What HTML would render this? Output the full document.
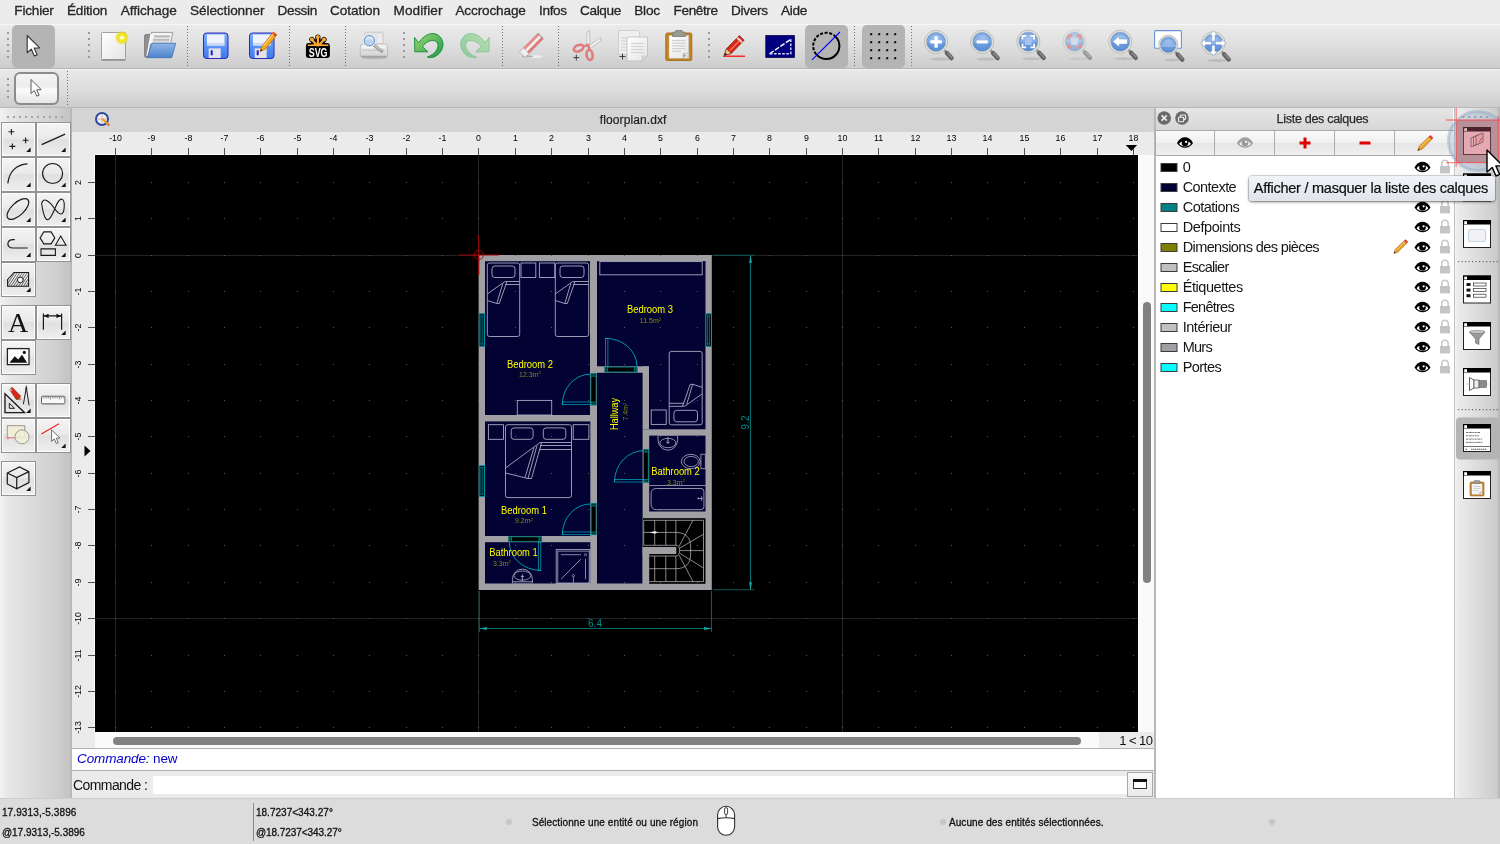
<!DOCTYPE html><html><head><meta charset="utf-8"><title>QCAD</title><style>
*{box-sizing:border-box;margin:0;padding:0}
html,body{width:1500px;height:844px;overflow:hidden;background:#ececec;font-family:"Liberation Sans",sans-serif;color:#222}
.abs{position:absolute}
#root{position:absolute;left:0;top:0;width:1500px;height:844px;overflow:hidden;will-change:transform}
#menubar{position:absolute;left:0;top:0;width:1500px;height:24px;background:#ececec}
#menubar span{position:absolute;top:3px;font-size:14.5px;line-height:17px;color:#262626;white-space:nowrap}
#tb1{position:absolute;left:0;top:24px;width:1500px;height:45px;background:linear-gradient(#f6f6f6 0,#f6f6f6 1px,#ebebeb 1px,#e0e0e0 45%,#cdcdcd 100%);border-bottom:1px solid #b4b4b4}
#tb2{position:absolute;left:0;top:69px;width:1500px;height:39px;background:linear-gradient(#f2f2f2 0,#f2f2f2 1px,#e9e9e9 1px,#dedede 50%,#cdcdcd 100%);border-bottom:1px solid #b8b8b8}
.sel{position:absolute;background:#b4b4b4;border-radius:5px}
.vsep{position:absolute;width:1px;background:repeating-linear-gradient(#707070 0,#707070 1px,transparent 1px,transparent 3px)}
.grip{position:absolute;width:2px}
.grip i{display:block;width:2px;height:2px;background:#9a9a9a;margin-bottom:4px}
#left{position:absolute;left:0;top:108px;width:72px;height:690px;background:linear-gradient(90deg,#f3f3f3 0%,#e7e7e7 12%,#dbdbdb 45%,#cfcfcf 78%,#c3c3c3 97%,#b0b0b0 100%)}
.tbtn{position:absolute;border:1px solid #929292;box-shadow:inset 0 0 0 1px rgba(255,255,255,0.85);background:linear-gradient(#f4f4f4 0%,#eaeaea 45%,#e0e0e0 52%,#efefef 100%)}

#tabbar{position:absolute;left:72px;top:108px;width:1082px;height:24px;background:#d4d4d4}
#hr{position:absolute;left:72px;top:132px;width:1082px;height:23px;background:#ebebeb}
#vr{position:absolute;left:72px;top:155px;width:23px;height:593px;background:#ebebeb}
#canvas{position:absolute;left:95px;top:155px;width:1043px;height:577px;background:#000;overflow:hidden}
#vscroll{position:absolute;left:1138px;top:155px;width:16px;height:577px;background:#fafafa}
#hscroll{position:absolute;left:95px;top:732px;width:1004px;height:16px;background:#fafafa}
#zoomlbl{position:absolute;left:1099px;top:732px;width:55px;height:16px;background:#ebebeb}
#zoomlbl span{position:absolute;white-space:nowrap;color:#111;line-height:15px}
#hist{position:absolute;left:72px;top:748px;width:1082px;height:23px;background:#fff;border-top:1px solid #b0b0b0;border-bottom:1px solid #b0b0b0}
#cmd{position:absolute;left:72px;top:771px;width:1082px;height:27px;background:#ebebeb}
#status{position:absolute;left:0;top:798px;width:1500px;height:46px;background:#dcdcdc;box-shadow:inset 0 1px 0 #cdcdcd}
#status span{position:absolute;font-size:10px;line-height:12px;color:#111;white-space:nowrap;-webkit-text-stroke:0.3px #111}
#rpanel{position:absolute;left:1156px;top:108px;width:298px;height:690px;background:#fff}
#rtb{position:absolute;left:1454px;top:108px;width:46px;height:690px;background:linear-gradient(90deg,#f3f3f3 0,#f3f3f3 1px,#ececec 2px,#dedede 45%,#cecece 88%,#c8c8c8 95.5%,#b9b9b9 96%,#b9b9b9 100%);border-left:1px solid #c2c2c2}
</style></head><body><div id="root"><div id="menubar"><span style="left:14.3px;top:1.7px;font-size:13.6px;letter-spacing:-0.20px;-webkit-text-stroke:0.3px #262626;">Fichier</span><span style="left:66.9px;top:1.7px;font-size:13.6px;letter-spacing:-0.18px;-webkit-text-stroke:0.3px #262626;">Édition</span><span style="left:120.7px;top:1.7px;font-size:13.6px;letter-spacing:-0.03px;-webkit-text-stroke:0.3px #262626;">Affichage</span><span style="left:190.1px;top:1.7px;font-size:13.6px;letter-spacing:-0.11px;-webkit-text-stroke:0.3px #262626;">Sélectionner</span><span style="left:277.5px;top:1.7px;font-size:13.6px;letter-spacing:-0.37px;-webkit-text-stroke:0.3px #262626;">Dessin</span><span style="left:330.1px;top:1.7px;font-size:13.6px;letter-spacing:-0.08px;-webkit-text-stroke:0.3px #262626;">Cotation</span><span style="left:393.5px;top:1.7px;font-size:13.6px;letter-spacing:0.08px;-webkit-text-stroke:0.3px #262626;">Modifier</span><span style="left:455.4px;top:1.7px;font-size:13.6px;letter-spacing:-0.14px;-webkit-text-stroke:0.3px #262626;">Accrochage</span><span style="left:539.0px;top:1.7px;font-size:13.6px;letter-spacing:-0.35px;-webkit-text-stroke:0.3px #262626;">Infos</span><span style="left:580.1px;top:1.7px;font-size:13.6px;letter-spacing:-0.38px;-webkit-text-stroke:0.3px #262626;">Calque</span><span style="left:634.3px;top:1.7px;font-size:13.6px;letter-spacing:-0.25px;-webkit-text-stroke:0.3px #262626;">Bloc</span><span style="left:673.6px;top:1.7px;font-size:13.6px;letter-spacing:-0.40px;-webkit-text-stroke:0.3px #262626;">Fenêtre</span><span style="left:731.1px;top:1.7px;font-size:13.6px;letter-spacing:-0.33px;-webkit-text-stroke:0.3px #262626;">Divers</span><span style="left:781.0px;top:1.7px;font-size:13.6px;letter-spacing:-0.31px;-webkit-text-stroke:0.3px #262626;">Aide</span></div><div id="tb1"><div class="sel" style="left:12px;top:1px;width:43px;height:43px"></div><div class="sel" style="left:805px;top:1px;width:43px;height:43px"></div><div class="sel" style="left:862px;top:1px;width:43px;height:43px"></div><div class="grip" style="left:7px;top:8px"><i></i><i></i><i></i><i></i><i></i></div><div class="grip" style="left:88px;top:8px"><i></i><i></i><i></i><i></i><i></i></div><div class="grip" style="left:403px;top:8px"><i></i><i></i><i></i><i></i><i></i></div><div class="grip" style="left:708px;top:8px"><i></i><i></i><i></i><i></i><i></i></div><div class="vsep" style="left:187px;top:2px;height:40px"></div><div class="vsep" style="left:289px;top:2px;height:40px"></div><div class="vsep" style="left:345px;top:2px;height:40px"></div><div class="vsep" style="left:502px;top:2px;height:40px"></div><div class="vsep" style="left:558px;top:2px;height:40px"></div><div class="vsep" style="left:854px;top:2px;height:40px"></div><div class="vsep" style="left:911px;top:2px;height:40px"></div><svg class="abs" style="left:0;top:0" width="1500" height="45" viewBox="0 24 1500 45"><defs>
<linearGradient id="gPaper" x1="0" y1="0" x2="1" y2="1"><stop offset="0" stop-color="#ffffff"/><stop offset="1" stop-color="#e4e4e4"/></linearGradient>
<linearGradient id="gBlue" x1="0" y1="0" x2="0" y2="1"><stop offset="0" stop-color="#92b6e6"/><stop offset="1" stop-color="#4c84cc"/></linearGradient>
<linearGradient id="gFloppy" x1="0" y1="0" x2="0" y2="1"><stop offset="0" stop-color="#7fb0ff"/><stop offset="1" stop-color="#3b78f0"/></linearGradient>
<linearGradient id="gGreen" x1="0" y1="0" x2="1" y2="1"><stop offset="0" stop-color="#9ad870"/><stop offset="1" stop-color="#1e9a48"/></linearGradient>
<linearGradient id="gGreenL" x1="0" y1="0" x2="1" y2="1"><stop offset="0" stop-color="#bfe0b0"/><stop offset="1" stop-color="#86c89a"/></linearGradient>
<radialGradient id="gLens" cx="0.5" cy="0.3" r="0.8"><stop offset="0" stop-color="#8fb6ea"/><stop offset="1" stop-color="#4a82d0"/></radialGradient>
<radialGradient id="gYel" cx="0.5" cy="0.5" r="0.5"><stop offset="0" stop-color="#ffffc8"/><stop offset="0.3" stop-color="#f6ec2a"/><stop offset="0.7" stop-color="#eee022" stop-opacity="0.95"/><stop offset="1" stop-color="#e8d800" stop-opacity="0.0"/></radialGradient>
<linearGradient id="gSilver" x1="0" y1="0" x2="0" y2="1"><stop offset="0" stop-color="#f4f4f4"/><stop offset="1" stop-color="#cfcfcf"/></linearGradient>
</defs><path transform="translate(27.2,35.5) scale(1.08)" d="M0 0 L0 16 L3.8 12.6 L6.6 19 L9.2 17.9 L6.5 11.7 L11.6 11.5 Z" fill="#fff" stroke="#3c3c3c" stroke-width="1.1" stroke-linejoin="round"/><rect x="101.5" y="32.5" width="24" height="27" rx="1" fill="url(#gPaper)" stroke="#a2a2a2" stroke-width="1"/><path d="M101.5 60 h24" stroke="#8a8a8a" stroke-width="1.4"/><circle cx="121.9" cy="37.7" r="7" fill="url(#gYel)"/><circle cx="121.9" cy="37.7" r="1.8" fill="#fffff0"/><path d="M144.6 36 q0 -1.6 1.6 -1.6 h6 l1.6 1.6 v21.4 h-7.6 q-1.6 0 -1.6 -1.6 z" fill="#909090" stroke="#707070" stroke-width="0.8"/><path d="M151.4 32.4 h21.4 l-2.4 12 h-21.6 z" fill="#f4f4f4" stroke="#8c8c8c" stroke-width="0.8"/><path d="M147.2 56 l4 -22" stroke="#fff" stroke-width="1.4"/><path d="M154 36.4 h16" stroke="#b4b4b4" stroke-width="2"/><path d="M153 39.8 h16.6" stroke="#bcbcbc" stroke-width="2.2"/><path d="M152.4 42.2 h16.6" stroke="#cacaca" stroke-width="1.4"/><path d="M151.7 43.3 h24 l-4 14.4 h-24.4 z" fill="url(#gBlue)" stroke="#3f72bc" stroke-width="0.8" stroke-linejoin="round"/><rect x="203.5" y="33" width="24.5" height="25.5" rx="3" fill="url(#gFloppy)" stroke="#2a2ab8" stroke-width="1"/><rect x="207.0" y="34.5" width="17.5" height="11" fill="#eef2ff"/><rect x="207.0" y="43" width="17.5" height="2.5" fill="#cfd8f4"/><rect x="208.7" y="48.4" width="12" height="9.6" fill="#e4e4e8"/><rect x="210.7" y="50.3" width="2" height="5" fill="#1a1ad8"/><rect x="249.5" y="33" width="24.5" height="25.5" rx="3" fill="url(#gFloppy)" stroke="#2a2ab8" stroke-width="1"/><rect x="253.0" y="34.5" width="17.5" height="11" fill="#eef2ff"/><rect x="253.0" y="43" width="17.5" height="2.5" fill="#cfd8f4"/><rect x="254.7" y="48.4" width="12" height="9.6" fill="#e4e4e8"/><rect x="256.7" y="50.3" width="2" height="5" fill="#1a1ad8"/><path d="M260 51.5 l1.8 -5 l11.5 -14.5 l3.6 2.9 l-11.6 14.4 z" fill="#f6a820" stroke="#b86800" stroke-width="0.7"/><path d="M271.6 33.8 l1.7 -1.9 l3.6 2.9 l-1.6 2 z" fill="#e04830"/><path d="M260 51.5 l0.9 -2.6 l1.6 1.3 z" fill="#402000"/><path d="M263.5 46 l10 -12.4" stroke="#ffe08a" stroke-width="1"/><g stroke="#000" stroke-width="5.2" stroke-linecap="round"><path d="M317.9 45 V37"/><path d="M316.5 45.5 L311.9 39.6"/><path d="M319.3 45.5 L324 39.6"/></g><rect x="305.9" y="43" width="24" height="15" rx="3" fill="#000"/><g stroke="#f9a832" stroke-width="2.2" stroke-linecap="round"><path d="M317.9 45 V37"/><path d="M316.8 45.3 L311.9 39.6"/><path d="M319 45.3 L324 39.6"/></g><circle cx="317.9" cy="37" r="1.9" fill="#f9a832"/><circle cx="311.9" cy="39.5" r="1.9" fill="#f9a832"/><circle cx="324" cy="39.5" r="1.9" fill="#f9a832"/><path d="M309 45.6 Q317.9 42.2 327 45.6 Z" fill="#f9a832"/><rect x="307.6" y="44.5" width="21" height="1.5" rx="0.7" fill="#f9a832"/><text x="308.7" y="56.7" font-size="13" font-weight="bold" fill="#fff" font-family="Liberation Sans" textLength="18.8" lengthAdjust="spacingAndGlyphs">SVG</text><rect x="364.8" y="32.2" width="18.4" height="13" rx="0.8" fill="#e2e2e2" stroke="#c4c4c4" stroke-width="0.7"/><rect x="377.5" y="34" width="4.6" height="9" fill="#ececec"/><path d="M360.3 47 q0 -3 3 -3 h21.4 q3 0 3 3 v8 q0 2 -2 2 h-23.4 q-2 0 -2 -2 z" fill="url(#gSilver)" stroke="#b4b4b4" stroke-width="0.8"/><path d="M361 56.6 h26" stroke="#a2a2a2" stroke-width="1.6"/><ellipse cx="374" cy="58.3" rx="12" ry="1" fill="#000" opacity="0.13"/><path d="M362.5 50.2 h22" stroke="#c0c0c0" stroke-width="1.1"/><path d="M363 47.2 h21.5" stroke="#fafafa" stroke-width="1"/><path d="M374.3 45.6 L381.6 51.2" stroke="#9c9c9c" stroke-width="3.2" stroke-linecap="round"/><path d="M374.8 45.6 L381.2 50.5" stroke="#c8c8c8" stroke-width="1.2" stroke-linecap="round"/><circle cx="369.4" cy="40.7" r="6.4" fill="#f2f2f0"/><circle cx="369.4" cy="40.7" r="5.2" fill="#bdd2ec" stroke="#5a8ed0" stroke-width="1"/><path d="M365.2 40 a4.3 4.3 0 0 1 8.4 0 q-4.2 -1.6 -8.4 0z" fill="#e4eefa" opacity="0.8"/><path d="M414.5 37.4 L414.8 51.8 L427.9 51.8 L422.4 46.6 C425 43.5 428 41 431 40.6 C436 40 438.5 43 437.9 46.5 C437.3 51 432.5 55.5 427.2 57 C430 58.2 433.5 57.5 436 56 C440.5 53.3 443.2 48.5 443 44 C442.7 38 438.5 33.8 433 33.6 C427 33.4 422 38 418.6 42.8 Z" fill="url(#gGreen)" stroke="#168a3c" stroke-width="0.9" stroke-linejoin="round"/><g transform="translate(903.7,0) scale(-1,1)"><path d="M414.5 37.4 L414.8 51.8 L427.9 51.8 L422.4 46.6 C425 43.5 428 41 431 40.6 C436 40 438.5 43 437.9 46.5 C437.3 51 432.5 55.5 427.2 57 C430 58.2 433.5 57.5 436 56 C440.5 53.3 443.2 48.5 443 44 C442.7 38 438.5 33.8 433 33.6 C427 33.4 422 38 418.6 42.8 Z" fill="url(#gGreenL)" stroke="#86c498" stroke-width="0.9" stroke-linejoin="round"/></g><ellipse cx="531" cy="56.6" rx="12" ry="1.5" fill="#fff" opacity="0.55"/><ellipse cx="527" cy="56.4" rx="6" ry="1.2" fill="#777" opacity="0.5"/><g transform="translate(531.6,45.2) rotate(-45.5)"><rect x="-13.2" y="-3.9" width="26" height="7.8" rx="1" fill="#e07a7a" stroke="#c46464" stroke-width="0.4"/><rect x="-13.2" y="-3.9" width="26" height="2.6" fill="#e89494" opacity="0.7"/><rect x="-13.2" y="-1.4" width="26" height="2.7" fill="#f0f0f0"/><rect x="-13.2" y="-3.9" width="5.4" height="7.8" fill="#efefef" stroke="#b8b0b0" stroke-width="0.4"/><path d="M12.8 -3.9 v7.8" stroke="#8a8a8a" stroke-width="0.9"/></g><path d="M586.5 46 l0.5 -14 l2.6 -1.5 l0.2 15 z" fill="#eee" stroke="#aaa" stroke-width="0.6"/><path d="M588.5 46 l12 -8.5 l0.5 3.3 l-10.5 7.5 z" fill="#eee" stroke="#aaa" stroke-width="0.6"/><ellipse cx="578.6" cy="48.2" rx="5" ry="3" transform="rotate(-22 578.6 48.2)" fill="none" stroke="#e27c7c" stroke-width="2.6"/><ellipse cx="589.6" cy="55" rx="3" ry="5" transform="rotate(-8 589.6 55)" fill="none" stroke="#e27c7c" stroke-width="2.6"/><path d="M584.2 46.4 l3.8 -1.6 l1.4 4.4" stroke="#e27c7c" stroke-width="2.4" fill="none"/><path d="M573.3 57.6 h6 M576.3 54.6 v6" stroke="#333" stroke-width="0.9"/><path d="M618.5 30.5 h19.5 l1.5 1.5 v22.5 h-21 z" fill="#efefef" stroke="#c8c8c8" stroke-width="0.8"/><path d="M621 38 h6" stroke="#d0d0d0" stroke-width="1"/><path d="M621 41 h6" stroke="#d0d0d0" stroke-width="1"/><path d="M621 44 h6" stroke="#d0d0d0" stroke-width="1"/><path d="M621 47 h6" stroke="#d0d0d0" stroke-width="1"/><path d="M621 50 h6" stroke="#d0d0d0" stroke-width="1"/><path d="M627 37 h20.5 v19 l-5.5 5 h-15 z" fill="url(#gPaper)" stroke="#bcbcbc" stroke-width="0.8"/><path d="M647.5 56 h-5.5 v5 z" fill="#d8d8d8" stroke="#bbb" stroke-width="0.5"/><path d="M631 43.5 h13" stroke="#d4d4d4" stroke-width="1.1"/><path d="M631 46.5 h13" stroke="#d4d4d4" stroke-width="1.1"/><path d="M631 49.5 h13" stroke="#d4d4d4" stroke-width="1.1"/><path d="M631 52.5 h13" stroke="#d4d4d4" stroke-width="1.1"/><path d="M619.5 56.5 h6 M622.5 53.5 v6" stroke="#333" stroke-width="0.9"/><rect x="665.8" y="33" width="26" height="27.5" rx="1.5" fill="#c48424" stroke="#a06a18" stroke-width="0.9"/><rect x="669" y="35.5" width="19.8" height="22.8" fill="url(#gPaper)" stroke="#b0b0b0" stroke-width="0.4"/><path d="M672 40.5 h13.5" stroke="#d0d0d0" stroke-width="1.2"/><path d="M672 43.2 h13.5" stroke="#d0d0d0" stroke-width="1.2"/><path d="M672 45.9 h13.5" stroke="#d0d0d0" stroke-width="1.2"/><path d="M672 48.6 h13.5" stroke="#d0d0d0" stroke-width="1.2"/><path d="M672 51.3 h9" stroke="#d0d0d0" stroke-width="1.2"/><path d="M683 58.3 v-5 h5.8 z" fill="#a8a8a8"/><path d="M683 53.3 h5.8 v5 z" fill="#e0e0e0" stroke="#b0b0b0" stroke-width="0.4"/><path d="M672.5 36.5 v-3 q0 -1.5 1.5 -1.5 h1.8 v-1.5 h6.2 v1.5 h1.8 q1.5 0 1.5 1.5 v3 z" fill="#9a9a90" stroke="#6e6e66" stroke-width="0.7"/><path d="M723 56.2 h22" stroke="#ff0000" stroke-width="1.2"/><path d="M724.3 55.3 l2.2 -6.5 l12.8 -13.2 l4.8 4.6 l-12.9 13.3 z" fill="#d82818" stroke="#7a1408" stroke-width="0.7"/><path d="M730 50.5 l11 -11.4" stroke="#ff7860" stroke-width="1.2"/><path d="M724.3 55.3 l2.2 -6.5 l4.7 4.7 z" fill="#f0c890" stroke="#7a1408" stroke-width="0.5"/><path d="M724.3 55.3 l0.9 -2.6 l1.8 1.8 z" fill="#111"/><path d="M736.5 38.4 l4.8 4.6 l1.3 -1.4 l-4.8 -4.6 z" fill="#d8d8d8"/><rect x="765.8" y="35.6" width="28.6" height="21.8" fill="#000080" stroke="#000040" stroke-width="0.8"/><path d="M769.5 53.8 L790.8 39.3" stroke="#fff" stroke-width="1.4" stroke-dasharray="5 1.6"/><path d="M790.8 39.3 V53.8 H769.5" stroke="#dcdcff" stroke-width="1.4" stroke-dasharray="2.6 1.5" fill="none"/><path d="M833.6 35.0 A13.1 13.1 0 1 1 816.1 54.1" fill="none" stroke="#000" stroke-width="2"/><path d="M816.1 54.1 A13.1 13.1 0 0 1 833.6 35.0" fill="none" stroke="#000" stroke-width="2" stroke-dasharray="3 1.6"/><path d="M812 59.8 L840 32" stroke="#0000ff" stroke-width="1.1"/><rect x="870.2" y="33.2" width="2" height="2" fill="#000"/><rect x="870.2" y="41.2" width="2" height="2" fill="#000"/><rect x="870.2" y="49.2" width="2" height="2" fill="#000"/><rect x="870.2" y="57.2" width="2" height="2" fill="#000"/><rect x="878.2" y="33.2" width="2" height="2" fill="#000"/><rect x="878.2" y="41.2" width="2" height="2" fill="#000"/><rect x="878.2" y="49.2" width="2" height="2" fill="#000"/><rect x="878.2" y="57.2" width="2" height="2" fill="#000"/><rect x="886.2" y="33.2" width="2" height="2" fill="#000"/><rect x="886.2" y="41.2" width="2" height="2" fill="#000"/><rect x="886.2" y="49.2" width="2" height="2" fill="#000"/><rect x="886.2" y="57.2" width="2" height="2" fill="#000"/><rect x="894.2" y="33.2" width="2" height="2" fill="#000"/><rect x="894.2" y="41.2" width="2" height="2" fill="#000"/><rect x="894.2" y="49.2" width="2" height="2" fill="#000"/><rect x="894.2" y="57.2" width="2" height="2" fill="#000"/><g opacity="1"><ellipse cx="940.1" cy="59.1" rx="10.0" ry="1.5" fill="#000" opacity="0.10"/><path d="M943.8 49.6 L947.5 53.5" stroke="#9a9a9a" stroke-width="2.4" stroke-linecap="round"/><path d="M946.9 53.1 L951.5 58.1" stroke="#626262" stroke-width="4.4" stroke-linecap="round"/><path d="M947.7 53.1 L951.9 57.5" stroke="#8e8e8e" stroke-width="1.4" stroke-linecap="round"/><circle cx="936.1" cy="41.9" r="11.6" fill="#e6e6de" stroke="#b4b4aa" stroke-width="0.8"/><circle cx="936.1" cy="41.9" r="9.6" fill="url(#gLens)" stroke="#98a8bc" stroke-width="0.6"/><path d="M926.7 42.9 A9.5 9.5 0 0 1 945.5 42.9 Z" fill="#fff" opacity="0.16"/><path d="M930.6 41.9 h11 M936.1 36.4 v11" stroke="#fff" stroke-width="3.2"/><path d="M930.6 41.9 h11 M936.1 36.4 v11" stroke="#ffffff" stroke-width="2.2"/></g><g opacity="1"><ellipse cx="986.2" cy="59.1" rx="10.0" ry="1.5" fill="#000" opacity="0.10"/><path d="M989.9 49.6 L993.6 53.5" stroke="#9a9a9a" stroke-width="2.4" stroke-linecap="round"/><path d="M993.0 53.1 L997.6 58.1" stroke="#626262" stroke-width="4.4" stroke-linecap="round"/><path d="M993.8 53.1 L998.0 57.5" stroke="#8e8e8e" stroke-width="1.4" stroke-linecap="round"/><circle cx="982.2" cy="41.9" r="11.6" fill="#e6e6de" stroke="#b4b4aa" stroke-width="0.8"/><circle cx="982.2" cy="41.9" r="9.6" fill="url(#gLens)" stroke="#98a8bc" stroke-width="0.6"/><path d="M972.8000000000001 42.9 A9.5 9.5 0 0 1 991.6 42.9 Z" fill="#fff" opacity="0.16"/><path d="M976.6 41.9 h11.2" stroke="#fff" stroke-width="3"/></g><g opacity="1"><ellipse cx="1032.3" cy="58.800000000000004" rx="10.0" ry="1.5" fill="#000" opacity="0.10"/><path d="M1036.0 49.3 L1039.7 53.2" stroke="#9a9a9a" stroke-width="2.4" stroke-linecap="round"/><path d="M1039.1 52.8 L1043.7 57.8" stroke="#626262" stroke-width="4.4" stroke-linecap="round"/><path d="M1039.9 52.8 L1044.1 57.2" stroke="#8e8e8e" stroke-width="1.4" stroke-linecap="round"/><circle cx="1028.3" cy="41.6" r="11.6" fill="#e6e6de" stroke="#b4b4aa" stroke-width="0.8"/><circle cx="1028.3" cy="41.6" r="9.6" fill="url(#gLens)" stroke="#98a8bc" stroke-width="0.6"/><path d="M1018.9 42.6 A9.5 9.5 0 0 1 1037.6999999999998 42.6 Z" fill="#fff" opacity="0.16"/><rect x="1025.0" y="38.300000000000004" width="6.6" height="6.6" fill="#a9c4ea"/><path d="M1022.5 39.4 v-3.6 h3.6" stroke="#fff" stroke-width="1.7" fill="none"/><path d="M1022.5 43.800000000000004 v3.6 h3.6" stroke="#fff" stroke-width="1.7" fill="none"/><path d="M1034.1 39.4 v-3.6 h-3.6" stroke="#fff" stroke-width="1.7" fill="none"/><path d="M1034.1 43.800000000000004 v3.6 h-3.6" stroke="#fff" stroke-width="1.7" fill="none"/></g><g opacity="0.55"><ellipse cx="1078.5" cy="58.800000000000004" rx="10.0" ry="1.5" fill="#000" opacity="0.10"/><path d="M1082.2 49.3 L1085.9 53.2" stroke="#9a9a9a" stroke-width="2.4" stroke-linecap="round"/><path d="M1085.3 52.8 L1089.9 57.8" stroke="#626262" stroke-width="4.4" stroke-linecap="round"/><path d="M1086.1 52.8 L1090.3 57.2" stroke="#8e8e8e" stroke-width="1.4" stroke-linecap="round"/><circle cx="1074.5" cy="41.6" r="11.6" fill="#e6e6de" stroke="#b4b4aa" stroke-width="0.8"/><circle cx="1074.5" cy="41.6" r="9.6" fill="url(#gLens)" stroke="#98a8bc" stroke-width="0.6"/><path d="M1065.1000000000001 42.6 A9.5 9.5 0 0 1 1083.8999999999999 42.6 Z" fill="#fff" opacity="0.16"/><rect x="1071.2" y="38.300000000000004" width="6.6" height="6.6" fill="#c8d8f0"/><path d="M1068.7 39.4 v-3.6 h3.6" stroke="#f05050" stroke-width="1.9" fill="none"/><path d="M1068.7 43.800000000000004 v3.6 h3.6" stroke="#f05050" stroke-width="1.9" fill="none"/><path d="M1080.3 39.4 v-3.6 h-3.6" stroke="#f05050" stroke-width="1.9" fill="none"/><path d="M1080.3 43.800000000000004 v3.6 h-3.6" stroke="#f05050" stroke-width="1.9" fill="none"/></g><g opacity="1"><ellipse cx="1124.3" cy="58.800000000000004" rx="10.0" ry="1.5" fill="#000" opacity="0.10"/><path d="M1128.0 49.3 L1131.7 53.2" stroke="#9a9a9a" stroke-width="2.4" stroke-linecap="round"/><path d="M1131.1 52.8 L1135.7 57.8" stroke="#626262" stroke-width="4.4" stroke-linecap="round"/><path d="M1131.9 52.8 L1136.1 57.2" stroke="#8e8e8e" stroke-width="1.4" stroke-linecap="round"/><circle cx="1120.3" cy="41.6" r="11.6" fill="#e6e6de" stroke="#b4b4aa" stroke-width="0.8"/><circle cx="1120.3" cy="41.6" r="9.6" fill="url(#gLens)" stroke="#98a8bc" stroke-width="0.6"/><path d="M1110.9 42.6 A9.5 9.5 0 0 1 1129.6999999999998 42.6 Z" fill="#fff" opacity="0.16"/><path d="M1112.8 41.6 l6.5 -5.5 v3 h8 v5 h-8 v3 z" fill="#fff" stroke="#5a88cc" stroke-width="0.4"/></g><rect x="1154.6" y="30.6" width="26.8" height="17.6" rx="1" fill="#fff" stroke="#6a94d8" stroke-width="1.1"/><g opacity="1"><ellipse cx="1172.3" cy="60.028" rx="8.299999999999999" ry="1.5" fill="#000" opacity="0.10"/><path d="M1174.6 51.1 L1178.3 55.0" stroke="#9a9a9a" stroke-width="2.4" stroke-linecap="round"/><path d="M1177.7 54.6 L1182.3 59.6" stroke="#626262" stroke-width="4.4" stroke-linecap="round"/><path d="M1178.5 54.6 L1182.7 59.0" stroke="#8e8e8e" stroke-width="1.4" stroke-linecap="round"/><circle cx="1168.3" cy="44.8" r="9.628" fill="#e6e6de" stroke="#b4b4aa" stroke-width="0.8"/><circle cx="1168.3" cy="44.8" r="7.967999999999999" fill="url(#gLens)" stroke="#98a8bc" stroke-width="0.6"/><path d="M1160.532 45.8 A7.867999999999999 7.867999999999999 0 0 1 1176.068 45.8 Z" fill="#fff" opacity="0.16"/><path d="M1160.6 46 h15.4" stroke="#a8c4ec" stroke-width="1.6" opacity="0.7"/></g><g opacity="1"><ellipse cx="1217.4" cy="60.400000000000006" rx="10.0" ry="1.5" fill="#000" opacity="0.10"/><path d="M1221.1 50.9 L1224.8 54.8" stroke="#9a9a9a" stroke-width="2.4" stroke-linecap="round"/><path d="M1224.2 54.4 L1228.8 59.4" stroke="#626262" stroke-width="4.4" stroke-linecap="round"/><path d="M1225.0 54.4 L1229.2 58.8" stroke="#8e8e8e" stroke-width="1.4" stroke-linecap="round"/><circle cx="1213.4" cy="43.2" r="11.6" fill="#e6e6de" stroke="#b4b4aa" stroke-width="0.8"/><circle cx="1213.4" cy="43.2" r="9.6" fill="url(#gLens)" stroke="#98a8bc" stroke-width="0.6"/><path d="M1204.0000000000002 44.2 A9.5 9.5 0 0 1 1222.8 44.2 Z" fill="#fff" opacity="0.16"/><path transform="rotate(0 1213.4 43.2)" d="M1211.8000000000002 41.2 v-6 h-2.4 l4 -4.6 l4 4.6 h-2.4 v6 z" fill="#fff" stroke="#5a88cc" stroke-width="0.5"/><path transform="rotate(90 1213.4 43.2)" d="M1211.8000000000002 41.2 v-6 h-2.4 l4 -4.6 l4 4.6 h-2.4 v6 z" fill="#fff" stroke="#5a88cc" stroke-width="0.5"/><path transform="rotate(180 1213.4 43.2)" d="M1211.8000000000002 41.2 v-6 h-2.4 l4 -4.6 l4 4.6 h-2.4 v6 z" fill="#fff" stroke="#5a88cc" stroke-width="0.5"/><path transform="rotate(270 1213.4 43.2)" d="M1211.8000000000002 41.2 v-6 h-2.4 l4 -4.6 l4 4.6 h-2.4 v6 z" fill="#fff" stroke="#5a88cc" stroke-width="0.5"/></g></svg></div><div id="tb2"><div class="grip" style="left:7px;top:9px"><i></i><i></i><i></i><i></i></div><div class="vsep" style="left:67px;top:2px;height:34px"></div><div class="abs" style="left:14px;top:3px;width:45px;height:33px;border:2px solid #8c8c8c;border-radius:6px;background:linear-gradient(#f4f4f4 0%,#ececec 45%,#fdfdfd 52%,#e6e6e6 100%)"></div><svg class="abs" style="left:0;top:0" width="100" height="39" viewBox="0 69 100 39"><path transform="translate(31,79.5) scale(0.88)" d="M0 0 L0 16 L3.8 12.6 L6.6 19 L9.2 17.9 L6.5 11.7 L11.6 11.5 Z" fill="#fff" stroke="#555" stroke-width="1.1" stroke-linejoin="round"/></svg></div><div id="left"><div class="abs" style="left:7px;top:8px;width:2px;height:2px;background:#a4a4a4"></div><div class="abs" style="left:13px;top:8px;width:2px;height:2px;background:#a4a4a4"></div><div class="abs" style="left:19px;top:8px;width:2px;height:2px;background:#a4a4a4"></div><div class="abs" style="left:25px;top:8px;width:2px;height:2px;background:#a4a4a4"></div><div class="abs" style="left:31px;top:8px;width:2px;height:2px;background:#a4a4a4"></div><div class="abs" style="left:37px;top:8px;width:2px;height:2px;background:#a4a4a4"></div><div class="abs" style="left:43px;top:8px;width:2px;height:2px;background:#a4a4a4"></div><div class="abs" style="left:49px;top:8px;width:2px;height:2px;background:#a4a4a4"></div><div class="abs" style="left:55px;top:8px;width:2px;height:2px;background:#a4a4a4"></div><div class="abs" style="left:61px;top:8px;width:2px;height:2px;background:#a4a4a4"></div><div class="tbtn" style="left:1px;top:14.0px;width:35px;height:35px"></div><svg class="abs" style="left:1px;top:14.0px" width="35" height="35" viewBox="1 122 35 35"><path d="M8.5 131.8 h5.8 M11.4 128.9 v5.8 M22.700000000000003 140.3 h5.8 M25.6 137.4 v5.8 M9.5 146.4 h5.8 M12.4 143.5 v5.8 " fill="none" stroke="#1a1a1a" stroke-width="1.1"/><path d="M30.6 147.5 V151.9 H26.200000000000003 z" fill="#111"/></svg><div class="tbtn" style="left:36px;top:14.0px;width:35px;height:35px"></div><svg class="abs" style="left:36px;top:14.0px" width="35" height="35" viewBox="36 122 35 35"><path d="M41.7 144.6 L65.1 134.1" fill="none" stroke="#1a1a1a" stroke-width="1.2"/><path d="M65.6 147.5 V151.9 H61.199999999999996 z" fill="#111"/></svg><div class="tbtn" style="left:1px;top:49.0px;width:35px;height:35px"></div><svg class="abs" style="left:1px;top:49.0px" width="35" height="35" viewBox="1 157 35 35"><path d="M7.8 183.4 C9 172 16 164.5 27.5 163.8" fill="none" stroke="#1a1a1a" stroke-width="1.2"/><path d="M30.6 182.5 V186.9 H26.200000000000003 z" fill="#111"/></svg><div class="tbtn" style="left:36px;top:49.0px;width:35px;height:35px"></div><svg class="abs" style="left:36px;top:49.0px" width="35" height="35" viewBox="36 157 35 35"><circle cx="52.6" cy="173.5" r="10" fill="none" stroke="#1a1a1a" stroke-width="1.2"/><path d="M65.6 182.5 V186.9 H61.199999999999996 z" fill="#111"/></svg><div class="tbtn" style="left:1px;top:84.0px;width:35px;height:35px"></div><svg class="abs" style="left:1px;top:84.0px" width="35" height="35" viewBox="1 192 35 35"><ellipse cx="17.9" cy="209" rx="13.6" ry="6.3" transform="rotate(-43 17.9 209)" fill="none" stroke="#1a1a1a" stroke-width="1.2"/><path d="M30.6 217.5 V221.9 H26.200000000000003 z" fill="#111"/></svg><div class="tbtn" style="left:36px;top:84.0px;width:35px;height:35px"></div><svg class="abs" style="left:36px;top:84.0px" width="35" height="35" viewBox="36 192 35 35"><path d="M41.6 203.5 C43.5 196 50 202 54.5 208.5 S63.5 217 64.2 207.5 S60.5 195.5 56 206 S46 232 41.6 203.5" fill="none" stroke="#1a1a1a" stroke-width="1.1"/><path d="M65.6 217.5 V221.9 H61.199999999999996 z" fill="#111"/></svg><div class="tbtn" style="left:1px;top:119.0px;width:35px;height:35px"></div><svg class="abs" style="left:1px;top:119.0px" width="35" height="35" viewBox="1 227 35 35"><path d="M14.8 239.7 C6 238.8 5.8 248 13 248 H27.7" fill="none" stroke="#1a1a1a" stroke-width="1.2"/><path d="M30.6 252.49999999999997 V256.9 H26.200000000000003 z" fill="#111"/></svg><div class="tbtn" style="left:36px;top:119.0px;width:35px;height:35px"></div><svg class="abs" style="left:36px;top:119.0px" width="35" height="35" viewBox="36 227 35 35"><path d="M43.8 231.9 h7.3 l3.7 6 l-3.7 6 h-7.3 l-3.7 -6 z" fill="none" stroke="#1a1a1a" stroke-width="1.1"/><path d="M55.4 245.2 l5.3 -9.2 l5.3 9.2 z" fill="none" stroke="#1a1a1a" stroke-width="1.1"/><path d="M41 248.9 h14.4 v6.5 h-14.4 z" fill="none" stroke="#1a1a1a" stroke-width="1.1"/><path d="M65.6 252.49999999999997 V256.9 H61.199999999999996 z" fill="#111"/></svg><div class="tbtn" style="left:1px;top:154.0px;width:35px;height:35px"></div><svg class="abs" style="left:1px;top:154.0px" width="35" height="35" viewBox="1 262 35 35"><clipPath id="hc"><path d="M7.6 279.5 l6.4 -7 h14.6 v13.8 h-21 z"/></clipPath><g clip-path="url(#hc)"><path d="M3.0 287 l10 -15.5" stroke="#3a3a3a" stroke-width="0.7"/><path d="M5.5 287 l10 -15.5" stroke="#3a3a3a" stroke-width="0.7"/><path d="M8.0 287 l10 -15.5" stroke="#3a3a3a" stroke-width="0.7"/><path d="M10.5 287 l10 -15.5" stroke="#3a3a3a" stroke-width="0.7"/><path d="M13.0 287 l10 -15.5" stroke="#3a3a3a" stroke-width="0.7"/><path d="M15.5 287 l10 -15.5" stroke="#3a3a3a" stroke-width="0.7"/><path d="M18.0 287 l10 -15.5" stroke="#3a3a3a" stroke-width="0.7"/><path d="M20.5 287 l10 -15.5" stroke="#3a3a3a" stroke-width="0.7"/><path d="M23.0 287 l10 -15.5" stroke="#3a3a3a" stroke-width="0.7"/><path d="M25.5 287 l10 -15.5" stroke="#3a3a3a" stroke-width="0.7"/><path d="M28.0 287 l10 -15.5" stroke="#3a3a3a" stroke-width="0.7"/></g><path d="M7.6 279.5 l6.4 -7 h14.6 v13.8 h-21 z" fill="none" stroke="#1a1a1a" stroke-width="1.1"/><circle cx="20.3" cy="279.9" r="2.9" fill="#f2f2f2" stroke="#1a1a1a" stroke-width="1"/><path d="M30.6 287.5 V291.9 H26.200000000000003 z" fill="#111"/></svg><div class="tbtn" style="left:1px;top:197.0px;width:35px;height:35px"></div><svg class="abs" style="left:1px;top:197.0px" width="35" height="35" viewBox="1 305 35 35"><text x="18" y="331.6" font-family="Liberation Serif" font-size="28" text-anchor="middle" fill="#111">A</text></svg><div class="tbtn" style="left:36px;top:197.0px;width:35px;height:35px"></div><svg class="abs" style="left:36px;top:197.0px" width="35" height="35" viewBox="36 305 35 35"><path d="M43.4 313.6 v16.2 M61.6 313.6 v16.2 M43.4 315.9 h18.2" fill="none" stroke="#1a1a1a" stroke-width="1.2"/><path d="M43.6 315.9 l5 -2.1 v4.2 z M61.4 315.9 l-5 -2.1 v4.2 z" fill="#111"/><path d="M65.6 330.5 V334.9 H61.199999999999996 z" fill="#111"/></svg><div class="tbtn" style="left:1px;top:232.0px;width:35px;height:35px"></div><svg class="abs" style="left:1px;top:232.0px" width="35" height="35" viewBox="1 340 35 35"><rect x="7.4" y="348.6" width="21.6" height="16" fill="#fff" stroke="#222" stroke-width="1.3"/><path d="M9.4 362.8 l5.4 -6.6 l3.4 3.3 l3.8 -4.8 l5.2 8.1 z" fill="#111"/><circle cx="24.3" cy="352.4" r="1.6" fill="#111"/></svg><div class="tbtn" style="left:1px;top:275.0px;width:35px;height:35px"></div><svg class="abs" style="left:1px;top:275.0px" width="35" height="35" viewBox="1 383 35 35"><path d="M5 393.8 V412.7 H24.6 Z" fill="none" stroke="#1a1a1a" stroke-width="1.3"/><path d="M9.3 403.2 V408.3 H14.6 Z" fill="none" stroke="#1a1a1a" stroke-width="1.0"/><path d="M9.6 389.6 l2.4 -2.4 l8.2 8.4 l-1 3.4 l-3.2 0.2 z" fill="#d82818" stroke="#7a1408" stroke-width="0.5"/><path d="M16 399.2 l3.2 -0.2 l1 -3.4 l0.9 4.4 z" fill="#e8c080" stroke="#604020" stroke-width="0.4"/><path d="M9.6 389.6 l1.1 -1.1 l1.6 1.6 l-1.1 1.1z" fill="#c8c8c8"/><path d="M26.3 387.6 L23.4 404.2 M26.3 387.6 L29.1 405.4 M26.3 385.8 v2.4" fill="none" stroke="#1a1a1a" stroke-width="1.0"/><circle cx="26.3" cy="388.8" r="1.1" fill="#333"/><path d="M30.6 408.5 V412.9 H26.200000000000003 z" fill="#111"/></svg><div class="tbtn" style="left:36px;top:275.0px;width:35px;height:35px"></div><svg class="abs" style="left:36px;top:275.0px" width="35" height="35" viewBox="36 383 35 35"><rect x="41.5" y="396.2" width="23.4" height="7.6" rx="1" fill="#f8f8f8" stroke="#555" stroke-width="0.9"/><path d="M42 404.3 h22.4" stroke="#999" stroke-width="0.6"/><path d="M43.1 396.6 v1.8" stroke="#333" stroke-width="0.5"/><path d="M45.0 396.6 v1.8" stroke="#333" stroke-width="0.5"/><path d="M46.8 396.6 v1.8" stroke="#333" stroke-width="0.5"/><path d="M48.6 396.6 v1.8" stroke="#333" stroke-width="0.5"/><path d="M50.4 396.6 v3.0" stroke="#333" stroke-width="0.5"/><path d="M52.3 396.6 v1.8" stroke="#333" stroke-width="0.5"/><path d="M54.1 396.6 v1.8" stroke="#333" stroke-width="0.5"/><path d="M55.9 396.6 v1.8" stroke="#333" stroke-width="0.5"/><path d="M57.8 396.6 v1.8" stroke="#333" stroke-width="0.5"/><path d="M59.6 396.6 v3.0" stroke="#333" stroke-width="0.5"/><path d="M61.4 396.6 v1.8" stroke="#333" stroke-width="0.5"/><path d="M63.3 396.6 v1.8" stroke="#333" stroke-width="0.5"/></svg><div class="tbtn" style="left:1px;top:310.0px;width:35px;height:35px"></div><svg class="abs" style="left:1px;top:310.0px" width="35" height="35" viewBox="1 418 35 35"><rect x="7.3" y="425.7" width="17.4" height="11.9" fill="#f1eed8" stroke="#9a9a90" stroke-width="1"/><circle cx="22" cy="436.9" r="7" fill="#f1eed8" fill-opacity="0.85" stroke="#9a9a90" stroke-width="1"/><path d="M7.8 438 h8" stroke="#f0a0a0" stroke-width="0.8"/><circle cx="7.8" cy="438" r="1.3" fill="#f08080"/></svg><div class="tbtn" style="left:36px;top:310.0px;width:35px;height:35px"></div><svg class="abs" style="left:36px;top:310.0px" width="35" height="35" viewBox="36 418 35 35"><path d="M41.3 434 L59 423.8" stroke="#f02020" stroke-width="1.2"/><path transform="translate(51.6,429.8) scale(0.72)" d="M0 0 L0 16 L3.8 12.6 L6.6 19 L9.2 17.9 L6.5 11.7 L11.6 11.5 Z" fill="#fff" stroke="#666" stroke-width="1.3"/><path d="M65.6 443.5 V447.9 H61.199999999999996 z" fill="#111"/></svg><div class="tbtn" style="left:1px;top:353.0px;width:35px;height:35px"></div><svg class="abs" style="left:1px;top:353.0px" width="35" height="35" viewBox="1 461 35 35"><path d="M7.3 473 l12.2 -6 l9.4 4.6 v11 l-12.2 6.2 l-9.4 -4.8 z M7.3 473 l9.4 4.6 l12.2 -6 M16.7 477.6 v11.2" fill="none" stroke="#1a1a1a" stroke-width="1.2"/><path d="M30.6 486.5 V490.9 H26.200000000000003 z" fill="#111"/></svg></div><div id="tabbar"><svg class="abs" style="left:22px;top:3px" width="18" height="18" viewBox="0 0 18 18"><circle cx="8" cy="8" r="6" fill="#eef0f6" stroke="#30489a" stroke-width="2"/><path d="M8 3.5 v9 M3.5 8 h9" stroke="#d89090" stroke-width="0.7"/><path d="M8.5 8 l5.5 5.2" stroke="#f0a000" stroke-width="2"/><circle cx="14.4" cy="13.8" r="1.2" fill="#e06060"/></svg><span class="abs" style="left:527.8px;top:5px;font-size:12px;color:#1e1e1e;white-space:nowrap;letter-spacing:0.1px;-webkit-text-stroke:0.2px #1e1e1e">floorplan.dxf</span></div><div id="hr"><svg class="abs" style="left:0;top:0" width="1082" height="23"><rect x="23" y="22" width="1043" height="1" fill="#fafafa"/><rect x="43" y="16" width="1" height="7" fill="#505050"/><text x="43.5" y="8.7" font-size="8.8" text-anchor="middle" fill="#000" font-family="Liberation Sans">-10</text><rect x="79" y="16" width="1" height="7" fill="#505050"/><text x="79.5" y="8.7" font-size="8.8" text-anchor="middle" fill="#000" font-family="Liberation Sans">-9</text><rect x="116" y="16" width="1" height="7" fill="#505050"/><text x="116.5" y="8.7" font-size="8.8" text-anchor="middle" fill="#000" font-family="Liberation Sans">-8</text><rect x="152" y="16" width="1" height="7" fill="#505050"/><text x="152.5" y="8.7" font-size="8.8" text-anchor="middle" fill="#000" font-family="Liberation Sans">-7</text><rect x="188" y="16" width="1" height="7" fill="#505050"/><text x="188.5" y="8.7" font-size="8.8" text-anchor="middle" fill="#000" font-family="Liberation Sans">-6</text><rect x="225" y="16" width="1" height="7" fill="#505050"/><text x="225.5" y="8.7" font-size="8.8" text-anchor="middle" fill="#000" font-family="Liberation Sans">-5</text><rect x="261" y="16" width="1" height="7" fill="#505050"/><text x="261.5" y="8.7" font-size="8.8" text-anchor="middle" fill="#000" font-family="Liberation Sans">-4</text><rect x="297" y="16" width="1" height="7" fill="#505050"/><text x="297.5" y="8.7" font-size="8.8" text-anchor="middle" fill="#000" font-family="Liberation Sans">-3</text><rect x="334" y="16" width="1" height="7" fill="#505050"/><text x="334.5" y="8.7" font-size="8.8" text-anchor="middle" fill="#000" font-family="Liberation Sans">-2</text><rect x="370" y="16" width="1" height="7" fill="#505050"/><text x="370.5" y="8.7" font-size="8.8" text-anchor="middle" fill="#000" font-family="Liberation Sans">-1</text><rect x="406" y="16" width="1" height="7" fill="#505050"/><text x="406.5" y="8.7" font-size="8.8" text-anchor="middle" fill="#000" font-family="Liberation Sans">0</text><rect x="443" y="16" width="1" height="7" fill="#505050"/><text x="443.5" y="8.7" font-size="8.8" text-anchor="middle" fill="#000" font-family="Liberation Sans">1</text><rect x="479" y="16" width="1" height="7" fill="#505050"/><text x="479.5" y="8.7" font-size="8.8" text-anchor="middle" fill="#000" font-family="Liberation Sans">2</text><rect x="516" y="16" width="1" height="7" fill="#505050"/><text x="516.5" y="8.7" font-size="8.8" text-anchor="middle" fill="#000" font-family="Liberation Sans">3</text><rect x="552" y="16" width="1" height="7" fill="#505050"/><text x="552.5" y="8.7" font-size="8.8" text-anchor="middle" fill="#000" font-family="Liberation Sans">4</text><rect x="588" y="16" width="1" height="7" fill="#505050"/><text x="588.5" y="8.7" font-size="8.8" text-anchor="middle" fill="#000" font-family="Liberation Sans">5</text><rect x="625" y="16" width="1" height="7" fill="#505050"/><text x="625.5" y="8.7" font-size="8.8" text-anchor="middle" fill="#000" font-family="Liberation Sans">6</text><rect x="661" y="16" width="1" height="7" fill="#505050"/><text x="661.5" y="8.7" font-size="8.8" text-anchor="middle" fill="#000" font-family="Liberation Sans">7</text><rect x="697" y="16" width="1" height="7" fill="#505050"/><text x="697.5" y="8.7" font-size="8.8" text-anchor="middle" fill="#000" font-family="Liberation Sans">8</text><rect x="734" y="16" width="1" height="7" fill="#505050"/><text x="734.5" y="8.7" font-size="8.8" text-anchor="middle" fill="#000" font-family="Liberation Sans">9</text><rect x="770" y="16" width="1" height="7" fill="#505050"/><text x="770.5" y="8.7" font-size="8.8" text-anchor="middle" fill="#000" font-family="Liberation Sans">10</text><rect x="806" y="16" width="1" height="7" fill="#505050"/><text x="806.5" y="8.7" font-size="8.8" text-anchor="middle" fill="#000" font-family="Liberation Sans">11</text><rect x="843" y="16" width="1" height="7" fill="#505050"/><text x="843.5" y="8.7" font-size="8.8" text-anchor="middle" fill="#000" font-family="Liberation Sans">12</text><rect x="879" y="16" width="1" height="7" fill="#505050"/><text x="879.5" y="8.7" font-size="8.8" text-anchor="middle" fill="#000" font-family="Liberation Sans">13</text><rect x="915" y="16" width="1" height="7" fill="#505050"/><text x="915.5" y="8.7" font-size="8.8" text-anchor="middle" fill="#000" font-family="Liberation Sans">14</text><rect x="952" y="16" width="1" height="7" fill="#505050"/><text x="952.5" y="8.7" font-size="8.8" text-anchor="middle" fill="#000" font-family="Liberation Sans">15</text><rect x="988" y="16" width="1" height="7" fill="#505050"/><text x="988.5" y="8.7" font-size="8.8" text-anchor="middle" fill="#000" font-family="Liberation Sans">16</text><rect x="1025" y="16" width="1" height="7" fill="#505050"/><text x="1025.5" y="8.7" font-size="8.8" text-anchor="middle" fill="#000" font-family="Liberation Sans">17</text><rect x="1061" y="16" width="1" height="7" fill="#505050"/><text x="1061.5" y="8.7" font-size="8.8" text-anchor="middle" fill="#000" font-family="Liberation Sans">18</text><path d="M1053.7 13.1 h11.4 l-5.7 5.8 z" fill="#000"/></svg></div><div id="vr"><svg class="abs" style="left:0;top:0" width="23" height="593"><rect x="22" y="0" width="1" height="577" fill="#fafafa"/><rect x="16" y="572" width="7" height="1" fill="#505050"/><text transform="translate(8.7,572.5) rotate(-90)" font-size="8.8" text-anchor="middle" fill="#000" font-family="Liberation Sans">-13</text><rect x="16" y="536" width="7" height="1" fill="#505050"/><text transform="translate(8.7,536.5) rotate(-90)" font-size="8.8" text-anchor="middle" fill="#000" font-family="Liberation Sans">-12</text><rect x="16" y="500" width="7" height="1" fill="#505050"/><text transform="translate(8.7,500.5) rotate(-90)" font-size="8.8" text-anchor="middle" fill="#000" font-family="Liberation Sans">-11</text><rect x="16" y="463" width="7" height="1" fill="#505050"/><text transform="translate(8.7,463.5) rotate(-90)" font-size="8.8" text-anchor="middle" fill="#000" font-family="Liberation Sans">-10</text><rect x="16" y="427" width="7" height="1" fill="#505050"/><text transform="translate(8.7,427.5) rotate(-90)" font-size="8.8" text-anchor="middle" fill="#000" font-family="Liberation Sans">-9</text><rect x="16" y="390" width="7" height="1" fill="#505050"/><text transform="translate(8.7,390.5) rotate(-90)" font-size="8.8" text-anchor="middle" fill="#000" font-family="Liberation Sans">-8</text><rect x="16" y="354" width="7" height="1" fill="#505050"/><text transform="translate(8.7,354.5) rotate(-90)" font-size="8.8" text-anchor="middle" fill="#000" font-family="Liberation Sans">-7</text><rect x="16" y="318" width="7" height="1" fill="#505050"/><text transform="translate(8.7,318.5) rotate(-90)" font-size="8.8" text-anchor="middle" fill="#000" font-family="Liberation Sans">-6</text><rect x="16" y="281" width="7" height="1" fill="#505050"/><text transform="translate(8.7,281.5) rotate(-90)" font-size="8.8" text-anchor="middle" fill="#000" font-family="Liberation Sans">-5</text><rect x="16" y="245" width="7" height="1" fill="#505050"/><text transform="translate(8.7,245.5) rotate(-90)" font-size="8.8" text-anchor="middle" fill="#000" font-family="Liberation Sans">-4</text><rect x="16" y="209" width="7" height="1" fill="#505050"/><text transform="translate(8.7,209.5) rotate(-90)" font-size="8.8" text-anchor="middle" fill="#000" font-family="Liberation Sans">-3</text><rect x="16" y="172" width="7" height="1" fill="#505050"/><text transform="translate(8.7,172.5) rotate(-90)" font-size="8.8" text-anchor="middle" fill="#000" font-family="Liberation Sans">-2</text><rect x="16" y="136" width="7" height="1" fill="#505050"/><text transform="translate(8.7,136.5) rotate(-90)" font-size="8.8" text-anchor="middle" fill="#000" font-family="Liberation Sans">-1</text><rect x="16" y="100" width="7" height="1" fill="#505050"/><text transform="translate(8.7,100.5) rotate(-90)" font-size="8.8" text-anchor="middle" fill="#000" font-family="Liberation Sans">0</text><rect x="16" y="63" width="7" height="1" fill="#505050"/><text transform="translate(8.7,63.5) rotate(-90)" font-size="8.8" text-anchor="middle" fill="#000" font-family="Liberation Sans">1</text><rect x="16" y="27" width="7" height="1" fill="#505050"/><text transform="translate(8.7,27.5) rotate(-90)" font-size="8.8" text-anchor="middle" fill="#000" font-family="Liberation Sans">2</text><path d="M12.5 290.5 v11 l6 -5.5 z" fill="#000"/></svg></div><div id="canvas"><svg class="abs" style="left:0;top:0" width="1043" height="577" viewBox="95 155 1043 577"><rect x="115" y="155" width="1" height="577" fill="#242424"/><rect x="478" y="155" width="1" height="577" fill="#242424"/><rect x="842" y="155" width="1" height="577" fill="#242424"/><rect x="95" y="255" width="1043" height="1" fill="#222"/><rect x="95" y="618" width="1043" height="1" fill="#222"/><rect x="478.8" y="255" width="233.0" height="335.0" fill="#a0a0a4"/><rect x="485" y="261.2" width="105.0" height="153.8" fill="#020233"/><rect x="597" y="261.2" width="108.5" height="168.1" fill="#020233"/><rect x="485" y="421.4" width="105.3" height="114.6" fill="#020233"/><rect x="485" y="542.2" width="105.3" height="41.3" fill="#020233"/><rect x="597" y="372.8" width="45.6" height="210.7" fill="#020233"/><rect x="649.2" y="435.6" width="56.3" height="75.9" fill="#020233"/><rect x="643" y="518.2" width="62.5" height="65.6" fill="#000"/><rect x="597" y="366.3" width="52.0" height="6.5" fill="#a0a0a4"/><rect x="642.6" y="366.3" width="6.4" height="63.0" fill="#a0a0a4"/><rect x="642.6" y="547" width="33.7" height="7.0" fill="#a0a0a4"/><rect x="642.6" y="547" width="6.6" height="43.0" fill="#a0a0a4"/><rect x="115" y="727" width="1" height="1" fill="#5a5a5a"/><rect x="115" y="691" width="1" height="1" fill="#5a5a5a"/><rect x="115" y="655" width="1" height="1" fill="#5a5a5a"/><rect x="115" y="618" width="1" height="1" fill="#5a5a5a"/><rect x="115" y="582" width="1" height="1" fill="#5a5a5a"/><rect x="115" y="545" width="1" height="1" fill="#5a5a5a"/><rect x="115" y="509" width="1" height="1" fill="#5a5a5a"/><rect x="115" y="473" width="1" height="1" fill="#5a5a5a"/><rect x="115" y="436" width="1" height="1" fill="#5a5a5a"/><rect x="115" y="400" width="1" height="1" fill="#5a5a5a"/><rect x="115" y="364" width="1" height="1" fill="#5a5a5a"/><rect x="115" y="327" width="1" height="1" fill="#5a5a5a"/><rect x="115" y="291" width="1" height="1" fill="#5a5a5a"/><rect x="115" y="255" width="1" height="1" fill="#5a5a5a"/><rect x="115" y="218" width="1" height="1" fill="#5a5a5a"/><rect x="115" y="182" width="1" height="1" fill="#5a5a5a"/><rect x="151" y="727" width="1" height="1" fill="#56565e"/><rect x="151" y="691" width="1" height="1" fill="#56565e"/><rect x="151" y="655" width="1" height="1" fill="#56565e"/><rect x="151" y="618" width="1" height="1" fill="#5a5a5a"/><rect x="151" y="582" width="1" height="1" fill="#56565e"/><rect x="151" y="545" width="1" height="1" fill="#56565e"/><rect x="151" y="509" width="1" height="1" fill="#56565e"/><rect x="151" y="473" width="1" height="1" fill="#56565e"/><rect x="151" y="436" width="1" height="1" fill="#56565e"/><rect x="151" y="400" width="1" height="1" fill="#56565e"/><rect x="151" y="364" width="1" height="1" fill="#56565e"/><rect x="151" y="327" width="1" height="1" fill="#56565e"/><rect x="151" y="291" width="1" height="1" fill="#56565e"/><rect x="151" y="255" width="1" height="1" fill="#5a5a5a"/><rect x="151" y="218" width="1" height="1" fill="#56565e"/><rect x="151" y="182" width="1" height="1" fill="#56565e"/><rect x="188" y="727" width="1" height="1" fill="#56565e"/><rect x="188" y="691" width="1" height="1" fill="#56565e"/><rect x="188" y="655" width="1" height="1" fill="#56565e"/><rect x="188" y="618" width="1" height="1" fill="#5a5a5a"/><rect x="188" y="582" width="1" height="1" fill="#56565e"/><rect x="188" y="545" width="1" height="1" fill="#56565e"/><rect x="188" y="509" width="1" height="1" fill="#56565e"/><rect x="188" y="473" width="1" height="1" fill="#56565e"/><rect x="188" y="436" width="1" height="1" fill="#56565e"/><rect x="188" y="400" width="1" height="1" fill="#56565e"/><rect x="188" y="364" width="1" height="1" fill="#56565e"/><rect x="188" y="327" width="1" height="1" fill="#56565e"/><rect x="188" y="291" width="1" height="1" fill="#56565e"/><rect x="188" y="255" width="1" height="1" fill="#5a5a5a"/><rect x="188" y="218" width="1" height="1" fill="#56565e"/><rect x="188" y="182" width="1" height="1" fill="#56565e"/><rect x="224" y="727" width="1" height="1" fill="#56565e"/><rect x="224" y="691" width="1" height="1" fill="#56565e"/><rect x="224" y="655" width="1" height="1" fill="#56565e"/><rect x="224" y="618" width="1" height="1" fill="#5a5a5a"/><rect x="224" y="582" width="1" height="1" fill="#56565e"/><rect x="224" y="545" width="1" height="1" fill="#56565e"/><rect x="224" y="509" width="1" height="1" fill="#56565e"/><rect x="224" y="473" width="1" height="1" fill="#56565e"/><rect x="224" y="436" width="1" height="1" fill="#56565e"/><rect x="224" y="400" width="1" height="1" fill="#56565e"/><rect x="224" y="364" width="1" height="1" fill="#56565e"/><rect x="224" y="327" width="1" height="1" fill="#56565e"/><rect x="224" y="291" width="1" height="1" fill="#56565e"/><rect x="224" y="255" width="1" height="1" fill="#5a5a5a"/><rect x="224" y="218" width="1" height="1" fill="#56565e"/><rect x="224" y="182" width="1" height="1" fill="#56565e"/><rect x="260" y="727" width="1" height="1" fill="#56565e"/><rect x="260" y="691" width="1" height="1" fill="#56565e"/><rect x="260" y="655" width="1" height="1" fill="#56565e"/><rect x="260" y="618" width="1" height="1" fill="#5a5a5a"/><rect x="260" y="582" width="1" height="1" fill="#56565e"/><rect x="260" y="545" width="1" height="1" fill="#56565e"/><rect x="260" y="509" width="1" height="1" fill="#56565e"/><rect x="260" y="473" width="1" height="1" fill="#56565e"/><rect x="260" y="436" width="1" height="1" fill="#56565e"/><rect x="260" y="400" width="1" height="1" fill="#56565e"/><rect x="260" y="364" width="1" height="1" fill="#56565e"/><rect x="260" y="327" width="1" height="1" fill="#56565e"/><rect x="260" y="291" width="1" height="1" fill="#56565e"/><rect x="260" y="255" width="1" height="1" fill="#5a5a5a"/><rect x="260" y="218" width="1" height="1" fill="#56565e"/><rect x="260" y="182" width="1" height="1" fill="#56565e"/><rect x="297" y="727" width="1" height="1" fill="#56565e"/><rect x="297" y="691" width="1" height="1" fill="#56565e"/><rect x="297" y="655" width="1" height="1" fill="#56565e"/><rect x="297" y="618" width="1" height="1" fill="#5a5a5a"/><rect x="297" y="582" width="1" height="1" fill="#56565e"/><rect x="297" y="545" width="1" height="1" fill="#56565e"/><rect x="297" y="509" width="1" height="1" fill="#56565e"/><rect x="297" y="473" width="1" height="1" fill="#56565e"/><rect x="297" y="436" width="1" height="1" fill="#56565e"/><rect x="297" y="400" width="1" height="1" fill="#56565e"/><rect x="297" y="364" width="1" height="1" fill="#56565e"/><rect x="297" y="327" width="1" height="1" fill="#56565e"/><rect x="297" y="291" width="1" height="1" fill="#56565e"/><rect x="297" y="255" width="1" height="1" fill="#5a5a5a"/><rect x="297" y="218" width="1" height="1" fill="#56565e"/><rect x="297" y="182" width="1" height="1" fill="#56565e"/><rect x="333" y="727" width="1" height="1" fill="#56565e"/><rect x="333" y="691" width="1" height="1" fill="#56565e"/><rect x="333" y="655" width="1" height="1" fill="#56565e"/><rect x="333" y="618" width="1" height="1" fill="#5a5a5a"/><rect x="333" y="582" width="1" height="1" fill="#56565e"/><rect x="333" y="545" width="1" height="1" fill="#56565e"/><rect x="333" y="509" width="1" height="1" fill="#56565e"/><rect x="333" y="473" width="1" height="1" fill="#56565e"/><rect x="333" y="436" width="1" height="1" fill="#56565e"/><rect x="333" y="400" width="1" height="1" fill="#56565e"/><rect x="333" y="364" width="1" height="1" fill="#56565e"/><rect x="333" y="327" width="1" height="1" fill="#56565e"/><rect x="333" y="291" width="1" height="1" fill="#56565e"/><rect x="333" y="255" width="1" height="1" fill="#5a5a5a"/><rect x="333" y="218" width="1" height="1" fill="#56565e"/><rect x="333" y="182" width="1" height="1" fill="#56565e"/><rect x="369" y="727" width="1" height="1" fill="#56565e"/><rect x="369" y="691" width="1" height="1" fill="#56565e"/><rect x="369" y="655" width="1" height="1" fill="#56565e"/><rect x="369" y="618" width="1" height="1" fill="#5a5a5a"/><rect x="369" y="582" width="1" height="1" fill="#56565e"/><rect x="369" y="545" width="1" height="1" fill="#56565e"/><rect x="369" y="509" width="1" height="1" fill="#56565e"/><rect x="369" y="473" width="1" height="1" fill="#56565e"/><rect x="369" y="436" width="1" height="1" fill="#56565e"/><rect x="369" y="400" width="1" height="1" fill="#56565e"/><rect x="369" y="364" width="1" height="1" fill="#56565e"/><rect x="369" y="327" width="1" height="1" fill="#56565e"/><rect x="369" y="291" width="1" height="1" fill="#56565e"/><rect x="369" y="255" width="1" height="1" fill="#5a5a5a"/><rect x="369" y="218" width="1" height="1" fill="#56565e"/><rect x="369" y="182" width="1" height="1" fill="#56565e"/><rect x="406" y="727" width="1" height="1" fill="#56565e"/><rect x="406" y="691" width="1" height="1" fill="#56565e"/><rect x="406" y="655" width="1" height="1" fill="#56565e"/><rect x="406" y="618" width="1" height="1" fill="#5a5a5a"/><rect x="406" y="582" width="1" height="1" fill="#56565e"/><rect x="406" y="545" width="1" height="1" fill="#56565e"/><rect x="406" y="509" width="1" height="1" fill="#56565e"/><rect x="406" y="473" width="1" height="1" fill="#56565e"/><rect x="406" y="436" width="1" height="1" fill="#56565e"/><rect x="406" y="400" width="1" height="1" fill="#56565e"/><rect x="406" y="364" width="1" height="1" fill="#56565e"/><rect x="406" y="327" width="1" height="1" fill="#56565e"/><rect x="406" y="291" width="1" height="1" fill="#56565e"/><rect x="406" y="255" width="1" height="1" fill="#5a5a5a"/><rect x="406" y="218" width="1" height="1" fill="#56565e"/><rect x="406" y="182" width="1" height="1" fill="#56565e"/><rect x="442" y="727" width="1" height="1" fill="#56565e"/><rect x="442" y="691" width="1" height="1" fill="#56565e"/><rect x="442" y="655" width="1" height="1" fill="#56565e"/><rect x="442" y="618" width="1" height="1" fill="#5a5a5a"/><rect x="442" y="582" width="1" height="1" fill="#56565e"/><rect x="442" y="545" width="1" height="1" fill="#56565e"/><rect x="442" y="509" width="1" height="1" fill="#56565e"/><rect x="442" y="473" width="1" height="1" fill="#56565e"/><rect x="442" y="436" width="1" height="1" fill="#56565e"/><rect x="442" y="400" width="1" height="1" fill="#56565e"/><rect x="442" y="364" width="1" height="1" fill="#56565e"/><rect x="442" y="327" width="1" height="1" fill="#56565e"/><rect x="442" y="291" width="1" height="1" fill="#56565e"/><rect x="442" y="255" width="1" height="1" fill="#5a5a5a"/><rect x="442" y="218" width="1" height="1" fill="#56565e"/><rect x="442" y="182" width="1" height="1" fill="#56565e"/><rect x="478" y="727" width="1" height="1" fill="#5a5a5a"/><rect x="478" y="691" width="1" height="1" fill="#5a5a5a"/><rect x="478" y="655" width="1" height="1" fill="#5a5a5a"/><rect x="478" y="618" width="1" height="1" fill="#5a5a5a"/><rect x="478" y="582" width="1" height="1" fill="#5a5a5a"/><rect x="478" y="545" width="1" height="1" fill="#5a5a5a"/><rect x="478" y="509" width="1" height="1" fill="#5a5a5a"/><rect x="478" y="473" width="1" height="1" fill="#5a5a5a"/><rect x="478" y="436" width="1" height="1" fill="#5a5a5a"/><rect x="478" y="400" width="1" height="1" fill="#5a5a5a"/><rect x="478" y="364" width="1" height="1" fill="#5a5a5a"/><rect x="478" y="327" width="1" height="1" fill="#5a5a5a"/><rect x="478" y="291" width="1" height="1" fill="#5a5a5a"/><rect x="478" y="255" width="1" height="1" fill="#5a5a5a"/><rect x="478" y="218" width="1" height="1" fill="#5a5a5a"/><rect x="478" y="182" width="1" height="1" fill="#5a5a5a"/><rect x="515" y="727" width="1" height="1" fill="#56565e"/><rect x="515" y="691" width="1" height="1" fill="#56565e"/><rect x="515" y="655" width="1" height="1" fill="#56565e"/><rect x="515" y="618" width="1" height="1" fill="#5a5a5a"/><rect x="515" y="582" width="1" height="1" fill="#56565e"/><rect x="515" y="545" width="1" height="1" fill="#56565e"/><rect x="515" y="509" width="1" height="1" fill="#56565e"/><rect x="515" y="473" width="1" height="1" fill="#56565e"/><rect x="515" y="436" width="1" height="1" fill="#56565e"/><rect x="515" y="400" width="1" height="1" fill="#56565e"/><rect x="515" y="364" width="1" height="1" fill="#56565e"/><rect x="515" y="327" width="1" height="1" fill="#56565e"/><rect x="515" y="291" width="1" height="1" fill="#56565e"/><rect x="515" y="255" width="1" height="1" fill="#5a5a5a"/><rect x="515" y="218" width="1" height="1" fill="#56565e"/><rect x="515" y="182" width="1" height="1" fill="#56565e"/><rect x="551" y="727" width="1" height="1" fill="#56565e"/><rect x="551" y="691" width="1" height="1" fill="#56565e"/><rect x="551" y="655" width="1" height="1" fill="#56565e"/><rect x="551" y="618" width="1" height="1" fill="#5a5a5a"/><rect x="551" y="582" width="1" height="1" fill="#56565e"/><rect x="551" y="545" width="1" height="1" fill="#56565e"/><rect x="551" y="509" width="1" height="1" fill="#56565e"/><rect x="551" y="473" width="1" height="1" fill="#56565e"/><rect x="551" y="436" width="1" height="1" fill="#56565e"/><rect x="551" y="400" width="1" height="1" fill="#56565e"/><rect x="551" y="364" width="1" height="1" fill="#56565e"/><rect x="551" y="327" width="1" height="1" fill="#56565e"/><rect x="551" y="291" width="1" height="1" fill="#56565e"/><rect x="551" y="255" width="1" height="1" fill="#5a5a5a"/><rect x="551" y="218" width="1" height="1" fill="#56565e"/><rect x="551" y="182" width="1" height="1" fill="#56565e"/><rect x="588" y="727" width="1" height="1" fill="#56565e"/><rect x="588" y="691" width="1" height="1" fill="#56565e"/><rect x="588" y="655" width="1" height="1" fill="#56565e"/><rect x="588" y="618" width="1" height="1" fill="#5a5a5a"/><rect x="588" y="582" width="1" height="1" fill="#56565e"/><rect x="588" y="545" width="1" height="1" fill="#56565e"/><rect x="588" y="509" width="1" height="1" fill="#56565e"/><rect x="588" y="473" width="1" height="1" fill="#56565e"/><rect x="588" y="436" width="1" height="1" fill="#56565e"/><rect x="588" y="400" width="1" height="1" fill="#56565e"/><rect x="588" y="364" width="1" height="1" fill="#56565e"/><rect x="588" y="327" width="1" height="1" fill="#56565e"/><rect x="588" y="291" width="1" height="1" fill="#56565e"/><rect x="588" y="255" width="1" height="1" fill="#5a5a5a"/><rect x="588" y="218" width="1" height="1" fill="#56565e"/><rect x="588" y="182" width="1" height="1" fill="#56565e"/><rect x="624" y="727" width="1" height="1" fill="#56565e"/><rect x="624" y="691" width="1" height="1" fill="#56565e"/><rect x="624" y="655" width="1" height="1" fill="#56565e"/><rect x="624" y="618" width="1" height="1" fill="#5a5a5a"/><rect x="624" y="582" width="1" height="1" fill="#56565e"/><rect x="624" y="545" width="1" height="1" fill="#56565e"/><rect x="624" y="509" width="1" height="1" fill="#56565e"/><rect x="624" y="473" width="1" height="1" fill="#56565e"/><rect x="624" y="436" width="1" height="1" fill="#56565e"/><rect x="624" y="400" width="1" height="1" fill="#56565e"/><rect x="624" y="364" width="1" height="1" fill="#56565e"/><rect x="624" y="327" width="1" height="1" fill="#56565e"/><rect x="624" y="291" width="1" height="1" fill="#56565e"/><rect x="624" y="255" width="1" height="1" fill="#5a5a5a"/><rect x="624" y="218" width="1" height="1" fill="#56565e"/><rect x="624" y="182" width="1" height="1" fill="#56565e"/><rect x="660" y="727" width="1" height="1" fill="#56565e"/><rect x="660" y="691" width="1" height="1" fill="#56565e"/><rect x="660" y="655" width="1" height="1" fill="#56565e"/><rect x="660" y="618" width="1" height="1" fill="#5a5a5a"/><rect x="660" y="582" width="1" height="1" fill="#56565e"/><rect x="660" y="545" width="1" height="1" fill="#56565e"/><rect x="660" y="509" width="1" height="1" fill="#56565e"/><rect x="660" y="473" width="1" height="1" fill="#56565e"/><rect x="660" y="436" width="1" height="1" fill="#56565e"/><rect x="660" y="400" width="1" height="1" fill="#56565e"/><rect x="660" y="364" width="1" height="1" fill="#56565e"/><rect x="660" y="327" width="1" height="1" fill="#56565e"/><rect x="660" y="291" width="1" height="1" fill="#56565e"/><rect x="660" y="255" width="1" height="1" fill="#5a5a5a"/><rect x="660" y="218" width="1" height="1" fill="#56565e"/><rect x="660" y="182" width="1" height="1" fill="#56565e"/><rect x="697" y="727" width="1" height="1" fill="#56565e"/><rect x="697" y="691" width="1" height="1" fill="#56565e"/><rect x="697" y="655" width="1" height="1" fill="#56565e"/><rect x="697" y="618" width="1" height="1" fill="#5a5a5a"/><rect x="697" y="582" width="1" height="1" fill="#56565e"/><rect x="697" y="545" width="1" height="1" fill="#56565e"/><rect x="697" y="509" width="1" height="1" fill="#56565e"/><rect x="697" y="473" width="1" height="1" fill="#56565e"/><rect x="697" y="436" width="1" height="1" fill="#56565e"/><rect x="697" y="400" width="1" height="1" fill="#56565e"/><rect x="697" y="364" width="1" height="1" fill="#56565e"/><rect x="697" y="327" width="1" height="1" fill="#56565e"/><rect x="697" y="291" width="1" height="1" fill="#56565e"/><rect x="697" y="255" width="1" height="1" fill="#5a5a5a"/><rect x="697" y="218" width="1" height="1" fill="#56565e"/><rect x="697" y="182" width="1" height="1" fill="#56565e"/><rect x="733" y="727" width="1" height="1" fill="#56565e"/><rect x="733" y="691" width="1" height="1" fill="#56565e"/><rect x="733" y="655" width="1" height="1" fill="#56565e"/><rect x="733" y="618" width="1" height="1" fill="#5a5a5a"/><rect x="733" y="582" width="1" height="1" fill="#56565e"/><rect x="733" y="545" width="1" height="1" fill="#56565e"/><rect x="733" y="509" width="1" height="1" fill="#56565e"/><rect x="733" y="473" width="1" height="1" fill="#56565e"/><rect x="733" y="436" width="1" height="1" fill="#56565e"/><rect x="733" y="400" width="1" height="1" fill="#56565e"/><rect x="733" y="364" width="1" height="1" fill="#56565e"/><rect x="733" y="327" width="1" height="1" fill="#56565e"/><rect x="733" y="291" width="1" height="1" fill="#56565e"/><rect x="733" y="255" width="1" height="1" fill="#5a5a5a"/><rect x="733" y="218" width="1" height="1" fill="#56565e"/><rect x="733" y="182" width="1" height="1" fill="#56565e"/><rect x="769" y="727" width="1" height="1" fill="#56565e"/><rect x="769" y="691" width="1" height="1" fill="#56565e"/><rect x="769" y="655" width="1" height="1" fill="#56565e"/><rect x="769" y="618" width="1" height="1" fill="#5a5a5a"/><rect x="769" y="582" width="1" height="1" fill="#56565e"/><rect x="769" y="545" width="1" height="1" fill="#56565e"/><rect x="769" y="509" width="1" height="1" fill="#56565e"/><rect x="769" y="473" width="1" height="1" fill="#56565e"/><rect x="769" y="436" width="1" height="1" fill="#56565e"/><rect x="769" y="400" width="1" height="1" fill="#56565e"/><rect x="769" y="364" width="1" height="1" fill="#56565e"/><rect x="769" y="327" width="1" height="1" fill="#56565e"/><rect x="769" y="291" width="1" height="1" fill="#56565e"/><rect x="769" y="255" width="1" height="1" fill="#5a5a5a"/><rect x="769" y="218" width="1" height="1" fill="#56565e"/><rect x="769" y="182" width="1" height="1" fill="#56565e"/><rect x="806" y="727" width="1" height="1" fill="#56565e"/><rect x="806" y="691" width="1" height="1" fill="#56565e"/><rect x="806" y="655" width="1" height="1" fill="#56565e"/><rect x="806" y="618" width="1" height="1" fill="#5a5a5a"/><rect x="806" y="582" width="1" height="1" fill="#56565e"/><rect x="806" y="545" width="1" height="1" fill="#56565e"/><rect x="806" y="509" width="1" height="1" fill="#56565e"/><rect x="806" y="473" width="1" height="1" fill="#56565e"/><rect x="806" y="436" width="1" height="1" fill="#56565e"/><rect x="806" y="400" width="1" height="1" fill="#56565e"/><rect x="806" y="364" width="1" height="1" fill="#56565e"/><rect x="806" y="327" width="1" height="1" fill="#56565e"/><rect x="806" y="291" width="1" height="1" fill="#56565e"/><rect x="806" y="255" width="1" height="1" fill="#5a5a5a"/><rect x="806" y="218" width="1" height="1" fill="#56565e"/><rect x="806" y="182" width="1" height="1" fill="#56565e"/><rect x="842" y="727" width="1" height="1" fill="#5a5a5a"/><rect x="842" y="691" width="1" height="1" fill="#5a5a5a"/><rect x="842" y="655" width="1" height="1" fill="#5a5a5a"/><rect x="842" y="618" width="1" height="1" fill="#5a5a5a"/><rect x="842" y="582" width="1" height="1" fill="#5a5a5a"/><rect x="842" y="545" width="1" height="1" fill="#5a5a5a"/><rect x="842" y="509" width="1" height="1" fill="#5a5a5a"/><rect x="842" y="473" width="1" height="1" fill="#5a5a5a"/><rect x="842" y="436" width="1" height="1" fill="#5a5a5a"/><rect x="842" y="400" width="1" height="1" fill="#5a5a5a"/><rect x="842" y="364" width="1" height="1" fill="#5a5a5a"/><rect x="842" y="327" width="1" height="1" fill="#5a5a5a"/><rect x="842" y="291" width="1" height="1" fill="#5a5a5a"/><rect x="842" y="255" width="1" height="1" fill="#5a5a5a"/><rect x="842" y="218" width="1" height="1" fill="#5a5a5a"/><rect x="842" y="182" width="1" height="1" fill="#5a5a5a"/><rect x="878" y="727" width="1" height="1" fill="#56565e"/><rect x="878" y="691" width="1" height="1" fill="#56565e"/><rect x="878" y="655" width="1" height="1" fill="#56565e"/><rect x="878" y="618" width="1" height="1" fill="#5a5a5a"/><rect x="878" y="582" width="1" height="1" fill="#56565e"/><rect x="878" y="545" width="1" height="1" fill="#56565e"/><rect x="878" y="509" width="1" height="1" fill="#56565e"/><rect x="878" y="473" width="1" height="1" fill="#56565e"/><rect x="878" y="436" width="1" height="1" fill="#56565e"/><rect x="878" y="400" width="1" height="1" fill="#56565e"/><rect x="878" y="364" width="1" height="1" fill="#56565e"/><rect x="878" y="327" width="1" height="1" fill="#56565e"/><rect x="878" y="291" width="1" height="1" fill="#56565e"/><rect x="878" y="255" width="1" height="1" fill="#5a5a5a"/><rect x="878" y="218" width="1" height="1" fill="#56565e"/><rect x="878" y="182" width="1" height="1" fill="#56565e"/><rect x="915" y="727" width="1" height="1" fill="#56565e"/><rect x="915" y="691" width="1" height="1" fill="#56565e"/><rect x="915" y="655" width="1" height="1" fill="#56565e"/><rect x="915" y="618" width="1" height="1" fill="#5a5a5a"/><rect x="915" y="582" width="1" height="1" fill="#56565e"/><rect x="915" y="545" width="1" height="1" fill="#56565e"/><rect x="915" y="509" width="1" height="1" fill="#56565e"/><rect x="915" y="473" width="1" height="1" fill="#56565e"/><rect x="915" y="436" width="1" height="1" fill="#56565e"/><rect x="915" y="400" width="1" height="1" fill="#56565e"/><rect x="915" y="364" width="1" height="1" fill="#56565e"/><rect x="915" y="327" width="1" height="1" fill="#56565e"/><rect x="915" y="291" width="1" height="1" fill="#56565e"/><rect x="915" y="255" width="1" height="1" fill="#5a5a5a"/><rect x="915" y="218" width="1" height="1" fill="#56565e"/><rect x="915" y="182" width="1" height="1" fill="#56565e"/><rect x="951" y="727" width="1" height="1" fill="#56565e"/><rect x="951" y="691" width="1" height="1" fill="#56565e"/><rect x="951" y="655" width="1" height="1" fill="#56565e"/><rect x="951" y="618" width="1" height="1" fill="#5a5a5a"/><rect x="951" y="582" width="1" height="1" fill="#56565e"/><rect x="951" y="545" width="1" height="1" fill="#56565e"/><rect x="951" y="509" width="1" height="1" fill="#56565e"/><rect x="951" y="473" width="1" height="1" fill="#56565e"/><rect x="951" y="436" width="1" height="1" fill="#56565e"/><rect x="951" y="400" width="1" height="1" fill="#56565e"/><rect x="951" y="364" width="1" height="1" fill="#56565e"/><rect x="951" y="327" width="1" height="1" fill="#56565e"/><rect x="951" y="291" width="1" height="1" fill="#56565e"/><rect x="951" y="255" width="1" height="1" fill="#5a5a5a"/><rect x="951" y="218" width="1" height="1" fill="#56565e"/><rect x="951" y="182" width="1" height="1" fill="#56565e"/><rect x="987" y="727" width="1" height="1" fill="#56565e"/><rect x="987" y="691" width="1" height="1" fill="#56565e"/><rect x="987" y="655" width="1" height="1" fill="#56565e"/><rect x="987" y="618" width="1" height="1" fill="#5a5a5a"/><rect x="987" y="582" width="1" height="1" fill="#56565e"/><rect x="987" y="545" width="1" height="1" fill="#56565e"/><rect x="987" y="509" width="1" height="1" fill="#56565e"/><rect x="987" y="473" width="1" height="1" fill="#56565e"/><rect x="987" y="436" width="1" height="1" fill="#56565e"/><rect x="987" y="400" width="1" height="1" fill="#56565e"/><rect x="987" y="364" width="1" height="1" fill="#56565e"/><rect x="987" y="327" width="1" height="1" fill="#56565e"/><rect x="987" y="291" width="1" height="1" fill="#56565e"/><rect x="987" y="255" width="1" height="1" fill="#5a5a5a"/><rect x="987" y="218" width="1" height="1" fill="#56565e"/><rect x="987" y="182" width="1" height="1" fill="#56565e"/><rect x="1024" y="727" width="1" height="1" fill="#56565e"/><rect x="1024" y="691" width="1" height="1" fill="#56565e"/><rect x="1024" y="655" width="1" height="1" fill="#56565e"/><rect x="1024" y="618" width="1" height="1" fill="#5a5a5a"/><rect x="1024" y="582" width="1" height="1" fill="#56565e"/><rect x="1024" y="545" width="1" height="1" fill="#56565e"/><rect x="1024" y="509" width="1" height="1" fill="#56565e"/><rect x="1024" y="473" width="1" height="1" fill="#56565e"/><rect x="1024" y="436" width="1" height="1" fill="#56565e"/><rect x="1024" y="400" width="1" height="1" fill="#56565e"/><rect x="1024" y="364" width="1" height="1" fill="#56565e"/><rect x="1024" y="327" width="1" height="1" fill="#56565e"/><rect x="1024" y="291" width="1" height="1" fill="#56565e"/><rect x="1024" y="255" width="1" height="1" fill="#5a5a5a"/><rect x="1024" y="218" width="1" height="1" fill="#56565e"/><rect x="1024" y="182" width="1" height="1" fill="#56565e"/><rect x="1060" y="727" width="1" height="1" fill="#56565e"/><rect x="1060" y="691" width="1" height="1" fill="#56565e"/><rect x="1060" y="655" width="1" height="1" fill="#56565e"/><rect x="1060" y="618" width="1" height="1" fill="#5a5a5a"/><rect x="1060" y="582" width="1" height="1" fill="#56565e"/><rect x="1060" y="545" width="1" height="1" fill="#56565e"/><rect x="1060" y="509" width="1" height="1" fill="#56565e"/><rect x="1060" y="473" width="1" height="1" fill="#56565e"/><rect x="1060" y="436" width="1" height="1" fill="#56565e"/><rect x="1060" y="400" width="1" height="1" fill="#56565e"/><rect x="1060" y="364" width="1" height="1" fill="#56565e"/><rect x="1060" y="327" width="1" height="1" fill="#56565e"/><rect x="1060" y="291" width="1" height="1" fill="#56565e"/><rect x="1060" y="255" width="1" height="1" fill="#5a5a5a"/><rect x="1060" y="218" width="1" height="1" fill="#56565e"/><rect x="1060" y="182" width="1" height="1" fill="#56565e"/><rect x="1097" y="727" width="1" height="1" fill="#56565e"/><rect x="1097" y="691" width="1" height="1" fill="#56565e"/><rect x="1097" y="655" width="1" height="1" fill="#56565e"/><rect x="1097" y="618" width="1" height="1" fill="#5a5a5a"/><rect x="1097" y="582" width="1" height="1" fill="#56565e"/><rect x="1097" y="545" width="1" height="1" fill="#56565e"/><rect x="1097" y="509" width="1" height="1" fill="#56565e"/><rect x="1097" y="473" width="1" height="1" fill="#56565e"/><rect x="1097" y="436" width="1" height="1" fill="#56565e"/><rect x="1097" y="400" width="1" height="1" fill="#56565e"/><rect x="1097" y="364" width="1" height="1" fill="#56565e"/><rect x="1097" y="327" width="1" height="1" fill="#56565e"/><rect x="1097" y="291" width="1" height="1" fill="#56565e"/><rect x="1097" y="255" width="1" height="1" fill="#5a5a5a"/><rect x="1097" y="218" width="1" height="1" fill="#56565e"/><rect x="1097" y="182" width="1" height="1" fill="#56565e"/><rect x="1133" y="727" width="1" height="1" fill="#56565e"/><rect x="1133" y="691" width="1" height="1" fill="#56565e"/><rect x="1133" y="655" width="1" height="1" fill="#56565e"/><rect x="1133" y="618" width="1" height="1" fill="#5a5a5a"/><rect x="1133" y="582" width="1" height="1" fill="#56565e"/><rect x="1133" y="545" width="1" height="1" fill="#56565e"/><rect x="1133" y="509" width="1" height="1" fill="#56565e"/><rect x="1133" y="473" width="1" height="1" fill="#56565e"/><rect x="1133" y="436" width="1" height="1" fill="#56565e"/><rect x="1133" y="400" width="1" height="1" fill="#56565e"/><rect x="1133" y="364" width="1" height="1" fill="#56565e"/><rect x="1133" y="327" width="1" height="1" fill="#56565e"/><rect x="1133" y="291" width="1" height="1" fill="#56565e"/><rect x="1133" y="255" width="1" height="1" fill="#5a5a5a"/><rect x="1133" y="218" width="1" height="1" fill="#56565e"/><rect x="1133" y="182" width="1" height="1" fill="#56565e"/><rect x="478.8" y="313.5" width="6.2" height="33.1" fill="#01010c"/><rect x="479.2" y="313.9" width="5.4" height="32.3" rx="0" fill="none" stroke="#00b4c4" stroke-width="0.8"/><path d="M480.90000000000003 316.1 V344.0 M482.8 316.1 V344.0" stroke="#009aa0" stroke-width="0.7"/><path d="M480.40000000000003 315.3 q1.5 2.2 3 0 M480.40000000000003 344.8 q1.5 -2.2 3 0" stroke="#00c0c8" stroke-width="0.7" fill="none"/><rect x="705.5" y="313.5" width="6.3" height="33.1" fill="#01010c"/><rect x="705.9" y="313.9" width="5.5" height="32.3" rx="0" fill="none" stroke="#00b4c4" stroke-width="0.8"/><path d="M707.6 316.1 V344.0 M709.5999999999999 316.1 V344.0" stroke="#009aa0" stroke-width="0.7"/><path d="M707.1 315.3 q1.5 2.2 3 0 M707.1 344.8 q1.5 -2.2 3 0" stroke="#00c0c8" stroke-width="0.7" fill="none"/><rect x="478.8" y="465" width="6.2" height="31.8" fill="#01010c"/><rect x="479.2" y="465.4" width="5.4" height="31.0" rx="0" fill="none" stroke="#00b4c4" stroke-width="0.8"/><path d="M480.90000000000003 467.6 V494.2 M482.8 467.6 V494.2" stroke="#009aa0" stroke-width="0.7"/><path d="M480.40000000000003 466.8 q1.5 2.2 3 0 M480.40000000000003 495.0 q1.5 -2.2 3 0" stroke="#00c0c8" stroke-width="0.7" fill="none"/><rect x="604.6" y="366.8" width="32.7" height="5.5" fill="#000"/><path d="M604.6 367.1 H637.3 M604.6 372.0 H637.3 M605.0 366.8 V372.3 M636.9 366.8 V372.3 M607.6 366.8 V372.3 M634.3 366.8 V372.3" stroke="#00a0a0" stroke-width="0.7"/><circle cx="606.3000000000001" cy="369.55" r="0.9" fill="none" stroke="#00a0a0" stroke-width="0.5"/><circle cx="635.5999999999999" cy="369.55" r="0.9" fill="none" stroke="#00a0a0" stroke-width="0.5"/><rect x="590.6" y="373.2" width="5.8" height="32.0" fill="#000"/><path d="M590.9 373.2 V405.2 M596.1 373.2 V405.2 M590.6 373.59999999999997 H596.4 M590.6 404.8 H596.4 M590.6 376.2 H596.4 M590.6 402.2 H596.4" stroke="#00a0a0" stroke-width="0.7"/><circle cx="593.5" cy="374.9" r="0.9" fill="none" stroke="#00a0a0" stroke-width="0.5"/><circle cx="593.5" cy="403.5" r="0.9" fill="none" stroke="#00a0a0" stroke-width="0.5"/><rect x="643.2" y="449" width="5.4" height="33.5" fill="#000"/><path d="M643.5 449 V482.5 M648.3000000000001 449 V482.5 M643.2 449.4 H648.6 M643.2 482.1 H648.6 M643.2 452 H648.6 M643.2 479.5 H648.6" stroke="#00a0a0" stroke-width="0.7"/><circle cx="645.9000000000001" cy="450.7" r="0.9" fill="none" stroke="#00a0a0" stroke-width="0.5"/><circle cx="645.9000000000001" cy="480.8" r="0.9" fill="none" stroke="#00a0a0" stroke-width="0.5"/><rect x="590.9" y="503" width="5.5" height="32.0" fill="#000"/><path d="M591.1999999999999 503 V535 M596.1 503 V535 M590.9 503.4 H596.4 M590.9 534.6 H596.4 M590.9 506 H596.4 M590.9 532 H596.4" stroke="#00a0a0" stroke-width="0.7"/><circle cx="593.65" cy="504.7" r="0.9" fill="none" stroke="#00a0a0" stroke-width="0.5"/><circle cx="593.65" cy="533.3" r="0.9" fill="none" stroke="#00a0a0" stroke-width="0.5"/><rect x="508.4" y="536.5" width="33.6" height="5.2" fill="#000"/><path d="M508.4 536.8 H542 M508.4 541.4000000000001 H542 M508.79999999999995 536.5 V541.7 M541.6 536.5 V541.7 M511.4 536.5 V541.7 M539 536.5 V541.7" stroke="#00a0a0" stroke-width="0.7"/><circle cx="510.09999999999997" cy="539.1" r="0.9" fill="none" stroke="#00a0a0" stroke-width="0.5"/><circle cx="540.3" cy="539.1" r="0.9" fill="none" stroke="#00a0a0" stroke-width="0.5"/><rect x="605.4" y="338.3" width="2.5" height="28.0" fill="none" stroke="#00b0c4" stroke-width="0.7"/><path d="M605.4 338.3 A31.6 28 0 0 1 637 366.3" stroke="#00b0c4" stroke-width="0.85" fill="none"/><rect x="562.3" y="402" width="28.7" height="2.7" fill="none" stroke="#00b0c4" stroke-width="0.7"/><path d="M562.3 404.7 A28.7 30.7 0 0 1 591 374" stroke="#00b0c4" stroke-width="0.85" fill="none"/><rect x="614.5" y="479.4" width="29.5" height="2.6" fill="none" stroke="#00b0c4" stroke-width="0.7"/><path d="M614.5 482 A29.5 31.4 0 0 1 644 450.6" stroke="#00b0c4" stroke-width="0.85" fill="none"/><rect x="562.3" y="532" width="28.7" height="2.7" fill="none" stroke="#00b0c4" stroke-width="0.7"/><path d="M562.3 534.7 A28.7 30.8 0 0 1 591 503.9" stroke="#00b0c4" stroke-width="0.85" fill="none"/><rect x="538.3" y="542.2" width="2.5" height="28.2" fill="none" stroke="#00b0c4" stroke-width="0.7"/><path d="M540.8 570.4 A31.5 28.2 0 0 1 509.3 542.2" stroke="#00b0c4" stroke-width="0.85" fill="none"/><rect x="487.3" y="263" width="32.4" height="73.5" rx="2.2" fill="none" stroke="#aaaac2" stroke-width="0.9"/><rect x="492.0" y="266" width="23.0" height="11.5" rx="2.8" fill="none" stroke="#aaaac2" stroke-width="0.9"/><path d="M506.3 281.5 L519.7 281.5" fill="none" stroke="#aaaac2" stroke-width="0.9"/><path d="M505.3 284.5 L519.7 284.5" fill="none" stroke="#aaaac2" stroke-width="0.9"/><path d="M487.3 294 L504.8 281.5 L506.8 282 L499.3 303.5 L496.8 303.5 L487.3 300.5" fill="none" stroke="#aaaac2" stroke-width="0.9"/><path d="M502.8 283.5 L496.8 303.5" fill="none" stroke="#aaaac2" stroke-width="0.9"/><rect x="521" y="263" width="14.8" height="14.5" rx="0" fill="none" stroke="#aaaac2" stroke-width="0.9"/><rect x="539.4" y="263" width="15.4" height="14.5" rx="0" fill="none" stroke="#aaaac2" stroke-width="0.9"/><rect x="555.3" y="263" width="33.4" height="73.5" rx="2.2" fill="none" stroke="#aaaac2" stroke-width="0.9"/><rect x="560.0" y="266" width="24.0" height="11.5" rx="2.8" fill="none" stroke="#aaaac2" stroke-width="0.9"/><path d="M574.3 281.5 L588.7 281.5" fill="none" stroke="#aaaac2" stroke-width="0.9"/><path d="M573.3 284.5 L588.7 284.5" fill="none" stroke="#aaaac2" stroke-width="0.9"/><path d="M555.3 294 L572.8 281.5 L574.8 282 L567.3 303.5 L564.8 303.5 L555.3 300.5" fill="none" stroke="#aaaac2" stroke-width="0.9"/><path d="M570.8 283.5 L564.8 303.5" fill="none" stroke="#aaaac2" stroke-width="0.9"/><rect x="517.3" y="400.4" width="34.4" height="14.6" rx="0" fill="none" stroke="#aaaac2" stroke-width="0.9"/><rect x="599.8" y="261.6" width="102.4" height="13.2" rx="0" fill="none" stroke="#aaaac2" stroke-width="0.9"/><rect x="669.2" y="351.4" width="33.0" height="73.4" rx="2.2" fill="none" stroke="#aaaac2" stroke-width="0.9"/><rect x="673.9000000000001" y="410.3" width="23.6" height="11.5" rx="2.8" fill="none" stroke="#aaaac2" stroke-width="0.9"/><path d="M669.2 406.3 L683.2 406.3" fill="none" stroke="#aaaac2" stroke-width="0.9"/><path d="M669.2 403.3 L684.2 403.3" fill="none" stroke="#aaaac2" stroke-width="0.9"/><path d="M702.2 393.8 L684.7 406.3 L682.7 405.8 L690.2 384.3 L692.7 384.3 L702.2 387.3" fill="none" stroke="#aaaac2" stroke-width="0.9"/><path d="M686.7 404.3 L692.7 384.3" fill="none" stroke="#aaaac2" stroke-width="0.9"/><rect x="651.2" y="410" width="15.0" height="14.4" rx="0" fill="none" stroke="#aaaac2" stroke-width="0.9"/><rect x="488.4" y="424.7" width="15.1" height="14.6" rx="0" fill="none" stroke="#aaaac2" stroke-width="0.9"/><rect x="573.2" y="424.7" width="15.7" height="14.6" rx="0" fill="none" stroke="#aaaac2" stroke-width="0.9"/><rect x="505.5" y="424.7" width="66.0" height="72.9" rx="2.2" fill="none" stroke="#aaaac2" stroke-width="0.9"/><rect x="511.2" y="427.9" width="21.9" height="11.4" rx="2.8" fill="none" stroke="#aaaac2" stroke-width="0.9"/><rect x="543.3" y="427.9" width="22.5" height="11.4" rx="2.8" fill="none" stroke="#aaaac2" stroke-width="0.9"/><path d="M541 442.5 L571.5 442.5" fill="none" stroke="#aaaac2" stroke-width="0.9"/><path d="M540 445.5 L571.5 445.5" fill="none" stroke="#aaaac2" stroke-width="0.9"/><path d="M539 449.5 L571.5 449.5" fill="none" stroke="#aaaac2" stroke-width="0.9"/><path d="M505.5 468 L540 442.5 L541.5 443 L531.5 478.5 L528 478.5 L505.5 473" fill="none" stroke="#aaaac2" stroke-width="0.9"/><path d="M537 445.5 L528 478.5" fill="none" stroke="#aaaac2" stroke-width="0.9"/><path d="M534 447.5 L525 477.5" fill="none" stroke="#aaaac2" stroke-width="0.9"/><clipPath id="b1"><rect x="485" y="542.2" width="105.3" height="41.4"/></clipPath><g clip-path="url(#b1)"><path d="M512.4 583.3 V579.5 A10 10.4 0 0 1 532.4 579.5 V583.3 Z" fill="none" stroke="#aaaac2" stroke-width="0.85"/><path d="M512.4 581.6 H532.4" stroke="#aaaac2" stroke-width="0.7"/><ellipse cx="522.4" cy="575.6" rx="8.4" ry="4.6" fill="none" stroke="#aaaac2" stroke-width="0.8"/><path d="M522.4 574.5 v7 M520.8 576.4 h3.2" stroke="#aaaac2" stroke-width="0.9"/></g><rect x="556.2" y="549.4" width="33.8" height="34.1" rx="0" fill="none" stroke="#aaaac2" stroke-width="0.85"/><rect x="557.8" y="551.1" width="31.4" height="31.9" rx="0" fill="none" stroke="#aaaac2" stroke-width="0.8"/><path d="M561 579.2 L580.9 559.1" fill="none" stroke="#aaaac2" stroke-width="0.8"/><path d="M561 554.7 L580.9 554.7" fill="none" stroke="#aaaac2" stroke-width="0.8"/><path d="M585.5 559 L585.5 579.2" fill="none" stroke="#aaaac2" stroke-width="0.8"/><circle cx="585.5" cy="554.7" r="1.1" fill="none" stroke="#aaaac2" stroke-width="0.7"/><circle cx="573.4" cy="575.6" r="1.1" fill="none" stroke="#aaaac2" stroke-width="0.7"/><path d="M573.4 576.8 L573.4 582.5" fill="none" stroke="#aaaac2" stroke-width="0.8"/><clipPath id="b2"><rect x="649.2" y="435.4" width="56.3" height="76.2"/></clipPath><g clip-path="url(#b2)"><path d="M658 435.4 V439.8 A9.8 10.4 0 0 0 677.6 439.8 V435.4 Z" fill="none" stroke="#aaaac2" stroke-width="0.85"/><ellipse cx="667.9" cy="443" rx="8" ry="4.7" fill="none" stroke="#aaaac2" stroke-width="0.8"/><path d="M667.9 437 v7 M666.3 442.2 h3.2" stroke="#aaaac2" stroke-width="0.9"/></g><rect x="700.9" y="454.2" width="4.4" height="14.5" rx="0" fill="none" stroke="#aaaac2" stroke-width="0.8"/><ellipse cx="690.8" cy="461.5" rx="9.4" ry="7.2" fill="none" stroke="#aaaac2" stroke-width="0.85"/><ellipse cx="691.2" cy="461.5" rx="7.2" ry="5.1" fill="none" stroke="#aaaac2" stroke-width="0.8"/><path d="M649.2 485.5 L705.5 485.5" fill="none" stroke="#aaaac2" stroke-width="0.8"/><path d="M656.5 488.5 H701 Q703.9 488.5 703.9 491.4 V506.8 Q703.9 509.7 701 509.7 H656.5 Q651.1 509.7 651.1 504.3 V493.9 Q651.1 488.5 656.5 488.5 Z" fill="none" stroke="#aaaac2" stroke-width="0.85"/><circle cx="698.3" cy="498.4" r="0.9" fill="#aaaac2"/><path d="M699 498.4 h4 M701.6 496.4 v4.6" stroke="#aaaac2" stroke-width="0.8"/><path d="M643.7 545.3 V520.3 H703.5 V581.6 H649.2" fill="none" stroke="#bcbcbc" stroke-width="0.75"/><path d="M654.7 520.3 L654.7 545.3" fill="none" stroke="#bcbcbc" stroke-width="0.72"/><path d="M654.7 556 L654.7 581.6" fill="none" stroke="#bcbcbc" stroke-width="0.72"/><path d="M665.8 520.3 L665.8 545.3" fill="none" stroke="#bcbcbc" stroke-width="0.72"/><path d="M665.8 556 L665.8 581.6" fill="none" stroke="#bcbcbc" stroke-width="0.72"/><path d="M675.9 520.3 L675.9 545.3" fill="none" stroke="#bcbcbc" stroke-width="0.72"/><path d="M675.9 556 L675.9 581.6" fill="none" stroke="#bcbcbc" stroke-width="0.72"/><path d="M643.7 545.3 L676 545.3" fill="none" stroke="#bcbcbc" stroke-width="0.72"/><path d="M649.2 556 L676 556" fill="none" stroke="#bcbcbc" stroke-width="0.72"/><path d="M643.7 532.4 L677 532.4" fill="none" stroke="#bcbcbc" stroke-width="0.72"/><path d="M649.2 568.7 L677 568.7" fill="none" stroke="#bcbcbc" stroke-width="0.72"/><path d="M676 545.3 Q679.6 545.6 679.6 550.6 Q679.6 555.7 676 556" fill="none" stroke="#bcbcbc" stroke-width="0.72"/><path d="M677 532.4 C686 533 690.6 538 690.6 546 V555 C690.6 563 686 568.2 677 568.7" fill="none" stroke="#bcbcbc" stroke-width="0.72"/><path d="M679 546.4 L693 520.3" fill="none" stroke="#bcbcbc" stroke-width="0.72"/><path d="M679.4 548.4 L703.5 534.2" fill="none" stroke="#bcbcbc" stroke-width="0.72"/><path d="M679.6 550.6 L703.5 550.6" fill="none" stroke="#bcbcbc" stroke-width="0.72"/><path d="M679.4 553 L703.5 568" fill="none" stroke="#bcbcbc" stroke-width="0.72"/><path d="M679 555 L693 581.6" fill="none" stroke="#bcbcbc" stroke-width="0.72"/><path d="M649.6 532.4 l6 -1.3 v2.6 z" fill="#fff"/><path d="M655 532.4 h2.5" stroke="#fff" stroke-width="1"/><text x="530.0" y="368.2" font-size="10" fill="#ffff00" text-anchor="middle" font-family="Liberation Sans" textLength="46" lengthAdjust="spacingAndGlyphs">Bedroom 2</text><text x="530" y="376.6" font-size="7" fill="#8a8a10" text-anchor="middle" font-family="Liberation Sans">12.3m<tspan dy="-2.3" font-size="4.3">2</tspan></text><text x="650.0" y="313.4" font-size="10" fill="#ffff00" text-anchor="middle" font-family="Liberation Sans" textLength="46" lengthAdjust="spacingAndGlyphs">Bedroom 3</text><text x="650.5" y="322.8" font-size="7" fill="#8a8a10" text-anchor="middle" font-family="Liberation Sans">11.5m<tspan dy="-2.3" font-size="4.3">2</tspan></text><text x="524.0" y="514.0" font-size="10" fill="#ffff00" text-anchor="middle" font-family="Liberation Sans" textLength="46" lengthAdjust="spacingAndGlyphs">Bedroom 1</text><text x="524" y="523.4" font-size="7" fill="#8a8a10" text-anchor="middle" font-family="Liberation Sans">9.2m<tspan dy="-2.3" font-size="4.3">2</tspan></text><text x="513.5" y="556.4" font-size="10" fill="#ffff00" text-anchor="middle" font-family="Liberation Sans" textLength="48.5" lengthAdjust="spacingAndGlyphs">Bathroom 1</text><text x="502" y="565.6" font-size="7" fill="#8a8a10" text-anchor="middle" font-family="Liberation Sans">3.3m<tspan dy="-2.3" font-size="4.3">2</tspan></text><text x="675.5" y="475.0" font-size="10" fill="#ffff00" text-anchor="middle" font-family="Liberation Sans" textLength="48.5" lengthAdjust="spacingAndGlyphs">Bathroom 2</text><text x="676" y="484.6" font-size="7" fill="#8a8a10" text-anchor="middle" font-family="Liberation Sans">3.3m<tspan dy="-2.3" font-size="4.3">2</tspan></text><text x="618.3" y="414" font-size="10" fill="#ffff00" text-anchor="middle" font-family="Liberation Sans" transform="rotate(-90 618.3 414)" textLength="32.2" lengthAdjust="spacingAndGlyphs">Hallway</text><text x="628" y="411.5" font-size="7" fill="#8a8a10" text-anchor="middle" font-family="Liberation Sans" transform="rotate(-90 628 411.5)">7.4m<tspan dy="-2.3" font-size="4.3">2</tspan></text><path d="M713 255.2 H754.2 M713 589.8 H754.2" stroke="#0e5a5a" stroke-width="1.1" fill="none"/><path d="M750.5 255.3 V589.7" stroke="#0a6c6c" stroke-width="1.1" fill="none"/><path d="M750.5 255 l-1.5 7.8 h3 z M750.5 590 l-1.5 -7.8 h3 z" fill="#14a4a4"/><text x="749" y="422.5" font-size="10" fill="#008a8a" text-anchor="middle" font-family="Liberation Sans" transform="rotate(-90 749 422.5)">9.2</text><path d="M479.3 591 V632.2 M711.5 591 V632.2" stroke="#0e5a5a" stroke-width="1.1" fill="none"/><path d="M479.2 628.5 H711.4" stroke="#0a6c6c" stroke-width="1.1" fill="none"/><path d="M479 628.5 l7.8 -1.5 v3 z M711.8 628.5 l-7.8 -1.5 v3 z" fill="#14a4a4"/><text x="595" y="627.4" font-size="10" fill="#008a8a" text-anchor="middle" font-family="Liberation Sans">6.4</text><path d="M459 255 H499 M478.8 235 V275" stroke="#a80000" stroke-width="1.1"/><circle cx="478.8" cy="255" r="4.6" fill="none" stroke="#c00000" stroke-width="0.9"/></svg></div><div id="vscroll"><div class="abs" style="left:5px;top:147px;width:8px;height:281px;background:#818181;border-radius:4px"></div></div><div id="hscroll"><div class="abs" style="left:18px;top:5px;width:968px;height:8px;background:#818181;border-radius:4px"></div></div><div id="zoomlbl"><span style="left:20.2px;top:1.2px;font-size:13px;letter-spacing:-0.54px;">1 &lt; 10</span></div><div id="hist"><span class="abs" style="left:5px;top:2px;font-size:13.5px;color:#0000c8;white-space:nowrap;letter-spacing:-0.12px"><i>Commande:</i> new</span></div><div id="cmd"><span style="left:1.0px;top:5.5px;font-size:14px;letter-spacing:-0.58px;position:absolute;color:#111;white-space:nowrap;">Commande :</span><div class="abs" style="left:81px;top:5px;width:974px;height:18px;background:#fff"></div><div class="abs" style="left:1055px;top:1px;width:26px;height:25px;border:1px solid #a8a8a8;background:linear-gradient(#f8f8f8,#eaeaea)"><svg class="abs" style="left:0;top:0" width="24" height="23"><rect x="5.5" y="6.5" width="13" height="9" fill="#fff" stroke="#333"/><rect x="5" y="6" width="14" height="3" fill="#111"/></svg></div></div><div id="status"><span style="left:1.9px;top:9px;font-size:10px;letter-spacing:0.12px;">17.9313,-5.3896</span><span style="left:1.9px;top:29px;font-size:10px;letter-spacing:0.00px;">@17.9313,-5.3896</span><div class="abs" style="left:253px;top:5px;width:1px;height:38px;background:#8a8a8a"></div><span style="left:255.9px;top:9px;font-size:10px;letter-spacing:0.03px;">18.7237&lt;343.27°</span><span style="left:255.9px;top:29px;font-size:10px;letter-spacing:-0.05px;">@18.7237&lt;343.27°</span><span style="left:531.9px;top:19px;font-size:10px;letter-spacing:0.09px;">Sélectionne une entité ou une région</span><span style="left:948.9px;top:19px;font-size:10px;letter-spacing:0.09px;">Aucune des entités sélectionnées.</span><div class="abs" style="left:506px;top:21px;width:6px;height:6px;border-radius:3px;background:#c6c6c6"></div><div class="abs" style="left:940px;top:21px;width:6px;height:6px;border-radius:3px;background:#c6c6c6"></div><div class="abs" style="left:1269px;top:21px;width:6px;height:6px;border-radius:3px;background:#c6c6c6"></div><svg class="abs" style="left:716px;top:7px" width="20" height="34"><rect x="1.6" y="1.3" width="17" height="29" rx="8.5" fill="#fff" stroke="#2e2e2e" stroke-width="1.1"/><path d="M1.6 13.6 Q10 11.8 18.6 13.6" stroke="#2e2e2e" fill="none" stroke-width="1.1"/><path d="M10.1 9.5 v3" stroke="#2e2e2e"/><rect x="8.6" y="2.6" width="3" height="7" rx="1.5" fill="#fff" stroke="#2e2e2e" stroke-width="0.9"/></svg></div><div class="abs" style="left:1153.6px;top:108px;width:2px;height:690px;background:#b8b8b8"></div><div id="rpanel"><div class="abs" style="left:0;top:0;width:297px;height:23px;background:linear-gradient(#e6e6e6,#d6d6d6)"></div><svg class="abs" style="left:0;top:0" width="297" height="48" viewBox="1156 108 297 48"><circle cx="1164.2" cy="118" r="6.8" fill="#6a6a6a"/><path d="M1161.6 115.4 l5.2 5.2 M1166.8 115.4 l-5.2 5.2" stroke="#f0f0f0" stroke-width="1.5"/><circle cx="1182" cy="118" r="6.8" fill="#6a6a6a"/><rect x="1180.4" y="115" width="5.2" height="4.4" rx="0.8" fill="none" stroke="#f0f0f0" stroke-width="1.1"/><rect x="1178.5" y="117.3" width="5.2" height="4.4" rx="0.8" fill="#6a6a6a" stroke="#f0f0f0" stroke-width="1.1"/></svg><span class="abs" style="left:120.6px;top:4.3px;font-size:12.5px;color:#2a2a2a;-webkit-text-stroke:0.25px #2a2a2a;white-space:nowrap;letter-spacing:-0.29px">Liste des calques</span><div class="abs" style="left:-1.2000000000000455px;top:22px;width:60.9px;height:26px;border:1.4px solid #acacac;background:linear-gradient(#fafafa 0%,#f0f0f0 48%,#e6e6e6 52%,#efefef 100%)"></div><div class="abs" style="left:58.299999999999955px;top:22px;width:61.4px;height:26px;border:1.4px solid #acacac;background:linear-gradient(#fafafa 0%,#f0f0f0 48%,#e6e6e6 52%,#efefef 100%)"></div><div class="abs" style="left:118.29999999999995px;top:22px;width:61.4px;height:26px;border:1.4px solid #acacac;background:linear-gradient(#fafafa 0%,#f0f0f0 48%,#e6e6e6 52%,#efefef 100%)"></div><div class="abs" style="left:178.29999999999995px;top:22px;width:61.4px;height:26px;border:1.4px solid #acacac;background:linear-gradient(#fafafa 0%,#f0f0f0 48%,#e6e6e6 52%,#efefef 100%)"></div><div class="abs" style="left:238.29999999999995px;top:22px;width:61.4px;height:26px;border:1.4px solid #acacac;background:linear-gradient(#fafafa 0%,#f0f0f0 48%,#e6e6e6 52%,#efefef 100%)"></div><svg class="abs" style="left:0;top:23px" width="297" height="25" viewBox="1156 131 297 25"><g opacity="1.0"><path d="M1177 143.0 C1180.5 135.4 1189.5 135.4 1193 143.0 C1189.5 149.4 1180.5 149.4 1177 143.0 Z" fill="#000"/><path d="M1179.2 143.79999999999998 C1181.5 140.0 1188.5 140.0 1190.8 143.79999999999998 C1188.5 147.4 1181.5 147.4 1179.2 143.79999999999998 Z" fill="#fff"/><circle cx="1185" cy="143.1" r="3.3" fill="#000"/><circle cx="1186.1" cy="141.9" r="1.1" fill="#fff"/></g><g opacity="0.33"><path d="M1237 143.0 C1240.5 135.4 1249.5 135.4 1253 143.0 C1249.5 149.4 1240.5 149.4 1237 143.0 Z" fill="#000"/><path d="M1239.2 143.79999999999998 C1241.5 140.0 1248.5 140.0 1250.8 143.79999999999998 C1248.5 147.4 1241.5 147.4 1239.2 143.79999999999998 Z" fill="#fff"/><circle cx="1245" cy="143.1" r="3.3" fill="#000"/><circle cx="1246.1" cy="141.9" r="1.1" fill="#fff"/></g><path d="M1299.5 143 h11 M1305 137.5 v11" stroke="#e00000" stroke-width="3"/><path d="M1359.5 143 h11" stroke="#e00000" stroke-width="3"/><g transform="translate(1425,143.5) scale(1.0)"><path d="M-7.2 7 l1.4 -4.2 l9.6 -9.6 l2.9 2.9 l-9.6 9.6 z" fill="#e8a030" stroke="#a06818" stroke-width="0.6"/><path d="M-4.6 3.6 l9.4 -9.4" stroke="#ffd070" stroke-width="1"/><path d="M3.8 -6.8 l1.6 -1.6 l2.9 2.9 l-1.6 1.6 z" fill="#e03828"/><path d="M-7.2 7 l0.7 -2 l1.3 1.3 z" fill="#302010"/></g></svg><svg class="abs" style="left:0;top:48px" width="297" height="230" viewBox="1156 156 297 230"><rect x="1161" y="163.5" width="16" height="8" fill="#000000" stroke="#3c3c3c" stroke-width="1"/><g opacity="1.0"><path d="M1414.5 167.4 C1418.0 159.8 1427.0 159.8 1430.5 167.4 C1427.0 173.8 1418.0 173.8 1414.5 167.4 Z" fill="#000"/><path d="M1416.7 168.2 C1419.0 164.4 1426.0 164.4 1428.3 168.2 C1426.0 171.8 1419.0 171.8 1416.7 168.2 Z" fill="#fff"/><circle cx="1422.5" cy="167.5" r="3.3" fill="#000"/><circle cx="1423.6" cy="166.3" r="1.1" fill="#fff"/></g><path d="M1441.8 166 v-2.6 a3.2 3.2 0 0 1 6.4 0 v2.6" fill="none" stroke="#c8c8c8" stroke-width="1.5"/><rect x="1440" y="166" width="10" height="7.4" fill="#c4c4c4"/><rect x="1161" y="183.5" width="16" height="8" fill="#000033" stroke="#3c3c3c" stroke-width="1"/><g opacity="1.0"><path d="M1414.5 187.4 C1418.0 179.8 1427.0 179.8 1430.5 187.4 C1427.0 193.8 1418.0 193.8 1414.5 187.4 Z" fill="#000"/><path d="M1416.7 188.2 C1419.0 184.4 1426.0 184.4 1428.3 188.2 C1426.0 191.8 1419.0 191.8 1416.7 188.2 Z" fill="#fff"/><circle cx="1422.5" cy="187.5" r="3.3" fill="#000"/><circle cx="1423.6" cy="186.3" r="1.1" fill="#fff"/></g><path d="M1441.8 186 v-2.6 a3.2 3.2 0 0 1 6.4 0 v2.6" fill="none" stroke="#c8c8c8" stroke-width="1.5"/><rect x="1440" y="186" width="10" height="7.4" fill="#c4c4c4"/><rect x="1161" y="203.5" width="16" height="8" fill="#008080" stroke="#3c3c3c" stroke-width="1"/><g opacity="1.0"><path d="M1414.5 207.4 C1418.0 199.8 1427.0 199.8 1430.5 207.4 C1427.0 213.8 1418.0 213.8 1414.5 207.4 Z" fill="#000"/><path d="M1416.7 208.2 C1419.0 204.4 1426.0 204.4 1428.3 208.2 C1426.0 211.8 1419.0 211.8 1416.7 208.2 Z" fill="#fff"/><circle cx="1422.5" cy="207.5" r="3.3" fill="#000"/><circle cx="1423.6" cy="206.3" r="1.1" fill="#fff"/></g><path d="M1441.8 206 v-2.6 a3.2 3.2 0 0 1 6.4 0 v2.6" fill="none" stroke="#c8c8c8" stroke-width="1.5"/><rect x="1440" y="206" width="10" height="7.4" fill="#c4c4c4"/><rect x="1161" y="223.5" width="16" height="8" fill="#ffffff" stroke="#3c3c3c" stroke-width="1"/><g opacity="1.0"><path d="M1414.5 227.4 C1418.0 219.8 1427.0 219.8 1430.5 227.4 C1427.0 233.8 1418.0 233.8 1414.5 227.4 Z" fill="#000"/><path d="M1416.7 228.2 C1419.0 224.4 1426.0 224.4 1428.3 228.2 C1426.0 231.8 1419.0 231.8 1416.7 228.2 Z" fill="#fff"/><circle cx="1422.5" cy="227.5" r="3.3" fill="#000"/><circle cx="1423.6" cy="226.3" r="1.1" fill="#fff"/></g><path d="M1441.8 226 v-2.6 a3.2 3.2 0 0 1 6.4 0 v2.6" fill="none" stroke="#c8c8c8" stroke-width="1.5"/><rect x="1440" y="226" width="10" height="7.4" fill="#c4c4c4"/><rect x="1161" y="243.5" width="16" height="8" fill="#808000" stroke="#3c3c3c" stroke-width="1"/><g opacity="1.0"><path d="M1414.5 247.4 C1418.0 239.8 1427.0 239.8 1430.5 247.4 C1427.0 253.8 1418.0 253.8 1414.5 247.4 Z" fill="#000"/><path d="M1416.7 248.2 C1419.0 244.4 1426.0 244.4 1428.3 248.2 C1426.0 251.8 1419.0 251.8 1416.7 248.2 Z" fill="#fff"/><circle cx="1422.5" cy="247.5" r="3.3" fill="#000"/><circle cx="1423.6" cy="246.3" r="1.1" fill="#fff"/></g><path d="M1441.8 246 v-2.6 a3.2 3.2 0 0 1 6.4 0 v2.6" fill="none" stroke="#c8c8c8" stroke-width="1.5"/><rect x="1440" y="246" width="10" height="7.4" fill="#c4c4c4"/><g transform="translate(1400.5,247) scale(0.92)"><path d="M-7.2 7 l1.4 -4.2 l9.6 -9.6 l2.9 2.9 l-9.6 9.6 z" fill="#e8a030" stroke="#a06818" stroke-width="0.6"/><path d="M-4.6 3.6 l9.4 -9.4" stroke="#ffd070" stroke-width="1"/><path d="M3.8 -6.8 l1.6 -1.6 l2.9 2.9 l-1.6 1.6 z" fill="#e03828"/><path d="M-7.2 7 l0.7 -2 l1.3 1.3 z" fill="#302010"/></g><rect x="1161" y="263.5" width="16" height="8" fill="#c0c0c0" stroke="#3c3c3c" stroke-width="1"/><g opacity="1.0"><path d="M1414.5 267.4 C1418.0 259.8 1427.0 259.8 1430.5 267.4 C1427.0 273.8 1418.0 273.8 1414.5 267.4 Z" fill="#000"/><path d="M1416.7 268.2 C1419.0 264.4 1426.0 264.4 1428.3 268.2 C1426.0 271.8 1419.0 271.8 1416.7 268.2 Z" fill="#fff"/><circle cx="1422.5" cy="267.5" r="3.3" fill="#000"/><circle cx="1423.6" cy="266.3" r="1.1" fill="#fff"/></g><path d="M1441.8 266 v-2.6 a3.2 3.2 0 0 1 6.4 0 v2.6" fill="none" stroke="#c8c8c8" stroke-width="1.5"/><rect x="1440" y="266" width="10" height="7.4" fill="#c4c4c4"/><rect x="1161" y="283.5" width="16" height="8" fill="#ffff00" stroke="#3c3c3c" stroke-width="1"/><g opacity="1.0"><path d="M1414.5 287.4 C1418.0 279.8 1427.0 279.8 1430.5 287.4 C1427.0 293.8 1418.0 293.8 1414.5 287.4 Z" fill="#000"/><path d="M1416.7 288.2 C1419.0 284.4 1426.0 284.4 1428.3 288.2 C1426.0 291.8 1419.0 291.8 1416.7 288.2 Z" fill="#fff"/><circle cx="1422.5" cy="287.5" r="3.3" fill="#000"/><circle cx="1423.6" cy="286.3" r="1.1" fill="#fff"/></g><path d="M1441.8 286 v-2.6 a3.2 3.2 0 0 1 6.4 0 v2.6" fill="none" stroke="#c8c8c8" stroke-width="1.5"/><rect x="1440" y="286" width="10" height="7.4" fill="#c4c4c4"/><rect x="1161" y="303.5" width="16" height="8" fill="#00ffff" stroke="#3c3c3c" stroke-width="1"/><g opacity="1.0"><path d="M1414.5 307.4 C1418.0 299.8 1427.0 299.8 1430.5 307.4 C1427.0 313.8 1418.0 313.8 1414.5 307.4 Z" fill="#000"/><path d="M1416.7 308.2 C1419.0 304.4 1426.0 304.4 1428.3 308.2 C1426.0 311.8 1419.0 311.8 1416.7 308.2 Z" fill="#fff"/><circle cx="1422.5" cy="307.5" r="3.3" fill="#000"/><circle cx="1423.6" cy="306.3" r="1.1" fill="#fff"/></g><path d="M1441.8 306 v-2.6 a3.2 3.2 0 0 1 6.4 0 v2.6" fill="none" stroke="#c8c8c8" stroke-width="1.5"/><rect x="1440" y="306" width="10" height="7.4" fill="#c4c4c4"/><rect x="1161" y="323.5" width="16" height="8" fill="#c0c0c0" stroke="#3c3c3c" stroke-width="1"/><g opacity="1.0"><path d="M1414.5 327.4 C1418.0 319.8 1427.0 319.8 1430.5 327.4 C1427.0 333.8 1418.0 333.8 1414.5 327.4 Z" fill="#000"/><path d="M1416.7 328.2 C1419.0 324.4 1426.0 324.4 1428.3 328.2 C1426.0 331.8 1419.0 331.8 1416.7 328.2 Z" fill="#fff"/><circle cx="1422.5" cy="327.5" r="3.3" fill="#000"/><circle cx="1423.6" cy="326.3" r="1.1" fill="#fff"/></g><path d="M1441.8 326 v-2.6 a3.2 3.2 0 0 1 6.4 0 v2.6" fill="none" stroke="#c8c8c8" stroke-width="1.5"/><rect x="1440" y="326" width="10" height="7.4" fill="#c4c4c4"/><rect x="1161" y="343.5" width="16" height="8" fill="#a0a0a4" stroke="#3c3c3c" stroke-width="1"/><g opacity="1.0"><path d="M1414.5 347.4 C1418.0 339.8 1427.0 339.8 1430.5 347.4 C1427.0 353.8 1418.0 353.8 1414.5 347.4 Z" fill="#000"/><path d="M1416.7 348.2 C1419.0 344.4 1426.0 344.4 1428.3 348.2 C1426.0 351.8 1419.0 351.8 1416.7 348.2 Z" fill="#fff"/><circle cx="1422.5" cy="347.5" r="3.3" fill="#000"/><circle cx="1423.6" cy="346.3" r="1.1" fill="#fff"/></g><path d="M1441.8 346 v-2.6 a3.2 3.2 0 0 1 6.4 0 v2.6" fill="none" stroke="#c8c8c8" stroke-width="1.5"/><rect x="1440" y="346" width="10" height="7.4" fill="#c4c4c4"/><rect x="1161" y="363.5" width="16" height="8" fill="#00ffff" stroke="#3c3c3c" stroke-width="1"/><g opacity="1.0"><path d="M1414.5 367.4 C1418.0 359.8 1427.0 359.8 1430.5 367.4 C1427.0 373.8 1418.0 373.8 1414.5 367.4 Z" fill="#000"/><path d="M1416.7 368.2 C1419.0 364.4 1426.0 364.4 1428.3 368.2 C1426.0 371.8 1419.0 371.8 1416.7 368.2 Z" fill="#fff"/><circle cx="1422.5" cy="367.5" r="3.3" fill="#000"/><circle cx="1423.6" cy="366.3" r="1.1" fill="#fff"/></g><path d="M1441.8 366 v-2.6 a3.2 3.2 0 0 1 6.4 0 v2.6" fill="none" stroke="#c8c8c8" stroke-width="1.5"/><rect x="1440" y="366" width="10" height="7.4" fill="#c4c4c4"/></svg><span class="abs" style="left:26.7px;top:51px;font-size:14.5px;line-height:17px;color:#161616;white-space:nowrap;letter-spacing:0.00px">0</span><span class="abs" style="left:26.7px;top:71px;font-size:14.5px;line-height:17px;color:#161616;white-space:nowrap;letter-spacing:-0.58px">Contexte</span><span class="abs" style="left:26.7px;top:91px;font-size:14.5px;line-height:17px;color:#161616;white-space:nowrap;letter-spacing:-0.53px">Cotations</span><span class="abs" style="left:26.7px;top:111px;font-size:14.5px;line-height:17px;color:#161616;white-space:nowrap;letter-spacing:-0.41px">Defpoints</span><span class="abs" style="left:26.7px;top:131px;font-size:14.5px;line-height:17px;color:#161616;white-space:nowrap;letter-spacing:-0.61px">Dimensions des pièces</span><span class="abs" style="left:26.7px;top:151px;font-size:14.5px;line-height:17px;color:#161616;white-space:nowrap;letter-spacing:-0.72px">Escalier</span><span class="abs" style="left:26.7px;top:171px;font-size:14.5px;line-height:17px;color:#161616;white-space:nowrap;letter-spacing:-0.44px">Étiquettes</span><span class="abs" style="left:26.7px;top:191px;font-size:14.5px;line-height:17px;color:#161616;white-space:nowrap;letter-spacing:-0.75px">Fenêtres</span><span class="abs" style="left:26.7px;top:211px;font-size:14.5px;line-height:17px;color:#161616;white-space:nowrap;letter-spacing:-0.46px">Intérieur</span><span class="abs" style="left:26.7px;top:231px;font-size:14.5px;line-height:17px;color:#161616;white-space:nowrap;letter-spacing:-0.74px">Murs</span><span class="abs" style="left:26.7px;top:251px;font-size:14.5px;line-height:17px;color:#161616;white-space:nowrap;letter-spacing:-0.58px">Portes</span></div><div id="rtb"><svg class="abs" style="left:-2px;top:0" width="47" height="690" viewBox="1453 108 47 690"><rect x="1462.2" y="116" width="2" height="2" fill="#a0a0a0"/><rect x="1468.2" y="116" width="2" height="2" fill="#a0a0a0"/><rect x="1474.2" y="116" width="2" height="2" fill="#a0a0a0"/><rect x="1480.2" y="116" width="2" height="2" fill="#a0a0a0"/><rect x="1486.2" y="116" width="2" height="2" fill="#a0a0a0"/><rect x="1456" y="120" width="44" height="43" rx="4" fill="#b4b4b4"/><rect x="1463.5" y="127.5" width="27" height="27" fill="#ffdcdc" stroke="#222" stroke-width="1"/><rect x="1463" y="127" width="28" height="4.5" fill="#000"/><rect x="1464.2" y="128.2" width="2.8" height="2.8" fill="#fff"/><g fill="none" stroke="#555" stroke-width="0.8"><path d="M1471 138 l7 -3 v9 l-7 3 z"/><path d="M1473.5 137 l7 -3 v9 l-7 3 z"/><path d="M1476 136 l7 -3 v9 l-7 3 z" fill="#ffc8c8"/></g><path d="M1479 142.5 l3 -5" stroke="#e04040" stroke-width="1"/><rect x="1463.5" y="174.0" width="27" height="27" fill="#fff" stroke="#222" stroke-width="1"/><rect x="1463" y="173.5" width="28" height="4.5" fill="#000"/><rect x="1464.2" y="174.7" width="2.8" height="2.8" fill="#fff"/><rect x="1463.5" y="220.5" width="27" height="27" fill="#fff" stroke="#222" stroke-width="1"/><rect x="1463" y="220" width="28" height="4.5" fill="#000"/><rect x="1464.2" y="221.2" width="2.8" height="2.8" fill="#fff"/><rect x="1468.5" y="229.5" width="17" height="12" rx="2.5" fill="#f2f2f4" stroke="#c8d4ec" stroke-width="1.2"/><rect x="1458.0" y="261" width="1.2" height="1.2" fill="#666"/><rect x="1461.5" y="261" width="1.2" height="1.2" fill="#666"/><rect x="1465.0" y="261" width="1.2" height="1.2" fill="#666"/><rect x="1468.5" y="261" width="1.2" height="1.2" fill="#666"/><rect x="1472.0" y="261" width="1.2" height="1.2" fill="#666"/><rect x="1475.5" y="261" width="1.2" height="1.2" fill="#666"/><rect x="1479.0" y="261" width="1.2" height="1.2" fill="#666"/><rect x="1482.5" y="261" width="1.2" height="1.2" fill="#666"/><rect x="1486.0" y="261" width="1.2" height="1.2" fill="#666"/><rect x="1489.5" y="261" width="1.2" height="1.2" fill="#666"/><rect x="1493.0" y="261" width="1.2" height="1.2" fill="#666"/><rect x="1496.5" y="261" width="1.2" height="1.2" fill="#666"/><rect x="1463.5" y="276.0" width="27" height="27" fill="#fff" stroke="#222" stroke-width="1"/><rect x="1463" y="275.5" width="28" height="4.5" fill="#000"/><rect x="1464.2" y="276.7" width="2.8" height="2.8" fill="#fff"/><rect x="1466.5" y="283.0" width="4" height="3" fill="#111"/><rect x="1473.5" y="283.0" width="12.5" height="3" fill="#fff" stroke="#333" stroke-width="0.7"/><rect x="1466.5" y="288.6" width="4" height="3" fill="#111"/><rect x="1473.5" y="288.6" width="12.5" height="3" fill="#fff" stroke="#333" stroke-width="0.7"/><rect x="1466.5" y="294.2" width="4" height="3" fill="#111"/><rect x="1473.5" y="294.2" width="12.5" height="3" fill="#fff" stroke="#333" stroke-width="0.7"/><rect x="1463.5" y="322.5" width="27" height="27" fill="#fff" stroke="#222" stroke-width="1"/><rect x="1463" y="322" width="28" height="4.5" fill="#000"/><rect x="1464.2" y="323.2" width="2.8" height="2.8" fill="#fff"/><path d="M1469.5 332 h15.5 l-6 7 v5.5 l-3.5 -1.5 v-4 z" fill="#9a9a9a" stroke="#666" stroke-width="0.6"/><ellipse cx="1477.2" cy="332" rx="7.8" ry="1.6" fill="#c8c8c8" stroke="#666" stroke-width="0.5"/><rect x="1463.5" y="368.5" width="27" height="27" fill="#fff" stroke="#222" stroke-width="1"/><rect x="1463" y="368" width="28" height="4.5" fill="#000"/><rect x="1464.2" y="369.2" width="2.8" height="2.8" fill="#fff"/><path d="M1466 384 h23" stroke="#f0a0a0" stroke-width="0.8"/><path d="M1469.5 377.5 l4.5 2.5 v8 l-4.5 2.5 z" fill="#fff" stroke="#333" stroke-width="0.8"/><rect x="1474" y="380" width="5" height="8" fill="#eee" stroke="#444" stroke-width="0.7"/><rect x="1479" y="380.5" width="7.5" height="7" fill="#8a8a8a" stroke="#555" stroke-width="0.5"/><rect x="1458.0" y="409" width="1.2" height="1.2" fill="#666"/><rect x="1461.5" y="409" width="1.2" height="1.2" fill="#666"/><rect x="1465.0" y="409" width="1.2" height="1.2" fill="#666"/><rect x="1468.5" y="409" width="1.2" height="1.2" fill="#666"/><rect x="1472.0" y="409" width="1.2" height="1.2" fill="#666"/><rect x="1475.5" y="409" width="1.2" height="1.2" fill="#666"/><rect x="1479.0" y="409" width="1.2" height="1.2" fill="#666"/><rect x="1482.5" y="409" width="1.2" height="1.2" fill="#666"/><rect x="1486.0" y="409" width="1.2" height="1.2" fill="#666"/><rect x="1489.5" y="409" width="1.2" height="1.2" fill="#666"/><rect x="1493.0" y="409" width="1.2" height="1.2" fill="#666"/><rect x="1496.5" y="409" width="1.2" height="1.2" fill="#666"/><rect x="1456" y="417.5" width="44" height="42" rx="4" fill="#b4b4b4"/><rect x="1463.5" y="424.5" width="27" height="27" fill="#fff" stroke="#222" stroke-width="1"/><rect x="1463" y="424" width="28" height="4.5" fill="#000"/><rect x="1464.2" y="425.2" width="2.8" height="2.8" fill="#fff"/><path d="M1466 432.5 h14" stroke="#777" stroke-width="1" stroke-dasharray="2.2 0.6 3 0.5 1.6 0.6"/><path d="M1466 435.8 h13" stroke="#777" stroke-width="1" stroke-dasharray="2.2 0.6 3 0.5 1.6 0.6"/><path d="M1466 439.1 h16" stroke="#777" stroke-width="1" stroke-dasharray="2.2 0.6 3 0.5 1.6 0.6"/><path d="M1466 442.4 h17" stroke="#777" stroke-width="1" stroke-dasharray="2.2 0.6 3 0.5 1.6 0.6"/><path d="M1463.5 446.5 h27" stroke="#333" stroke-width="0.7"/><path d="M1465.5 449.2 h2 M1471 449.2 h16" stroke="#555" stroke-width="1.1" stroke-dasharray="1.5 0.5"/><rect x="1463.5" y="471.5" width="27" height="27" fill="#fff" stroke="#222" stroke-width="1"/><rect x="1463" y="471" width="28" height="4.5" fill="#000"/><rect x="1464.2" y="472.2" width="2.8" height="2.8" fill="#fff"/><rect x="1470" y="482" width="14" height="14" rx="1" fill="#c4893a" stroke="#9a6420" stroke-width="0.6"/><rect x="1471.8" y="483.8" width="10.4" height="10.6" fill="#f4f4f4"/><path d="M1473.5 486.5 h7 M1473.5 488.5 h7 M1473.5 490.5 h5" stroke="#c8c8c8" stroke-width="0.8"/><rect x="1474" y="480.5" width="6" height="3" rx="0.8" fill="#9a9a90" stroke="#666" stroke-width="0.4"/><path d="M1479.5 494.4 v-2.6 h2.7 z" fill="#aaa"/></svg></div><svg class="abs" style="left:1430px;top:95px" width="70" height="100" viewBox="1430 95 70 100"><defs><filter id="bl" x="-20%" y="-20%" width="140%" height="140%"><feGaussianBlur stdDeviation="0.7"/></filter></defs><circle cx="1478" cy="141" r="29.5" fill="#7a9cc4" fill-opacity="0.25" stroke="#8aa6c8" stroke-opacity="0.45" stroke-width="3"/><rect x="1456" y="120" width="42.5" height="42.6" fill="#ff2020" fill-opacity="0.20"/><g filter="url(#bl)"><path d="M1446 120 H1500 M1446 162.6 H1500 M1456.2 108 V167 M1498.4 116 V166" stroke="#ff4040" stroke-opacity="0.6" stroke-width="1.4" fill="none"/></g></svg><div class="abs" style="left:1249px;top:175.6px;width:245.5px;height:25.6px;background:linear-gradient(#f1f3f7,#e0e4ea);border-radius:3px;box-shadow:0 1px 3px rgba(0,0,0,0.5),0 0 0 0.5px rgba(0,0,0,0.25)"><span class="abs" style="left:4.8px;top:4.6px;font-size:14.5px;line-height:17px;color:#0c0c0c;-webkit-text-stroke:0.2px #0c0c0c;white-space:nowrap;letter-spacing:-0.25px">Afficher / masquer la liste des calques</span></div><svg class="abs" style="left:1480px;top:145px" width="20" height="34" viewBox="0 0 20 34"><path d="M7 5 L7 27 L12.2 22.4 L16 31 L19.6 29.4 L15.9 21 L22.8 20.8 Z" fill="#fff" stroke="#000" stroke-width="1.4" stroke-linejoin="round"/></svg></div></body></html>
